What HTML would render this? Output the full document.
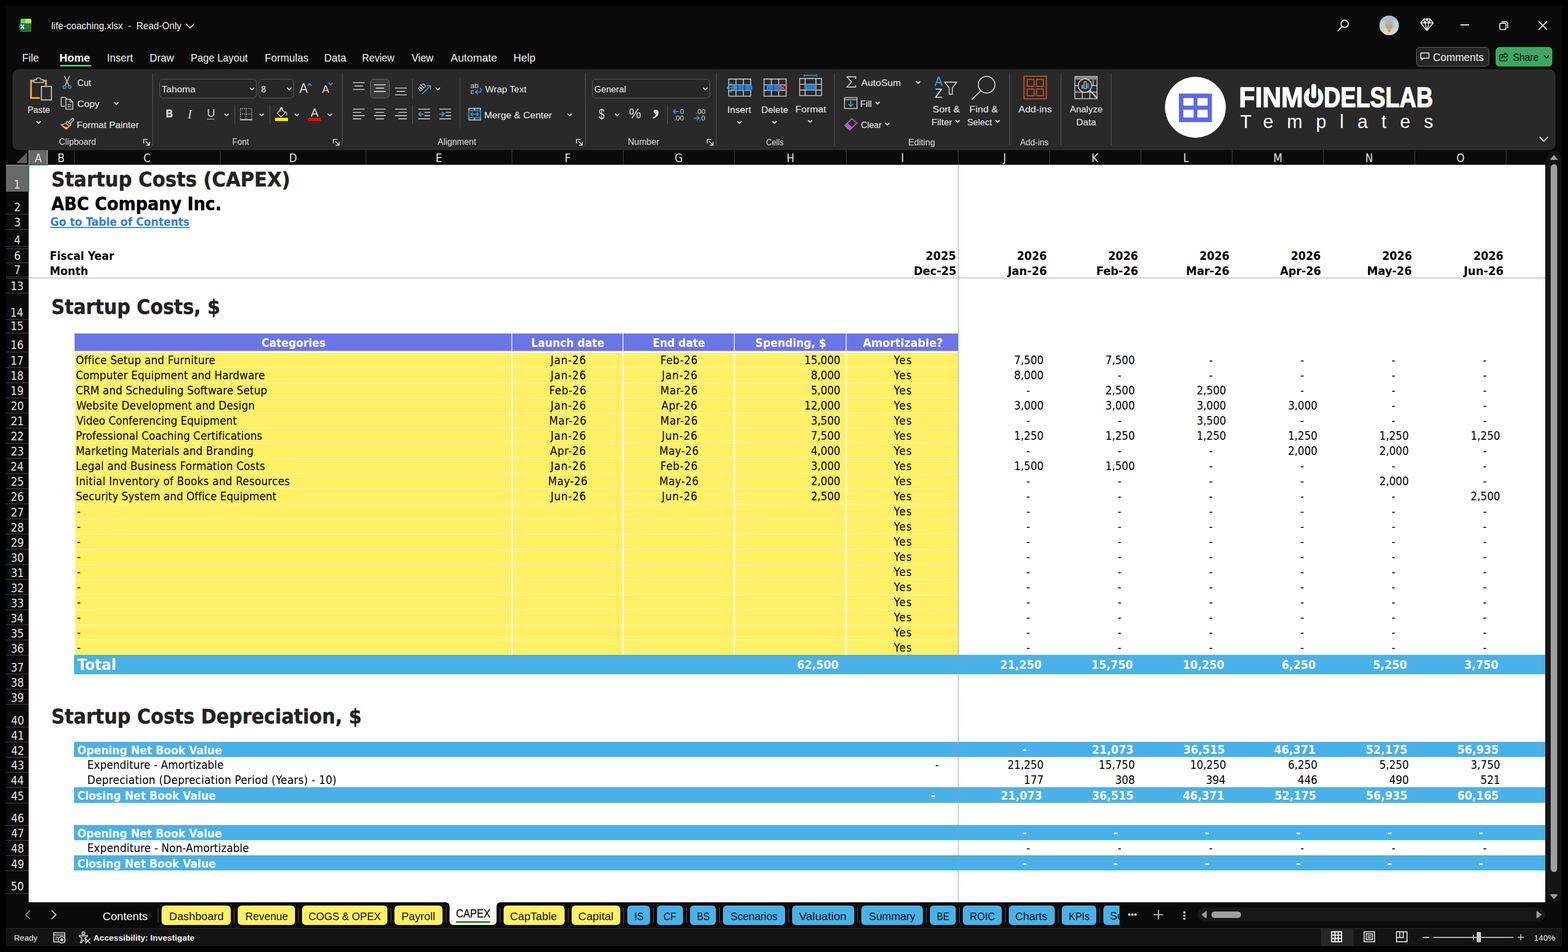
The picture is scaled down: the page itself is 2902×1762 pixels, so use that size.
<!DOCTYPE html>
<html lang="en"><head><meta charset="utf-8"><title>life-coaching.xlsx - Excel</title>
<style>
html,body{margin:0;padding:0;background:#000;}
body{width:2902px;height:1762px;position:relative;overflow:hidden;}
#app div,#app span,#app svg,#app a{position:absolute;display:block;box-sizing:border-box;}
#app span,#app a{white-space:pre;line-height:1;color:#fff;text-decoration:none;}
.u{font-family:"Liberation Sans", sans-serif;}
.c{font-family:"DejaVu Sans Condensed", "DejaVu Sans", sans-serif;}
.d{font-family:"DejaVu Sans", sans-serif;}
.b{font-weight:700;}
.i{font-style:italic;}

</style></head>
<body><div id="app" style="left:0;top:0;width:2902px;height:1762px;overflow:hidden;">
<div style="left:11px;top:11px;width:2880px;height:1740px;background:#0a0a0a;"></div>
<div style="left:53px;top:305px;width:2807px;height:1365.4px;background:#fff;"></div>
<div style="left:53.2px;top:278px;width:35.3px;height:27px;background:#686868;"></div>
<div style="left:53.2px;top:278px;width:0.9px;height:26px;background:#b4b4b4;"></div>
<div style="left:87px;top:278px;width:0.9px;height:26px;background:#b4b4b4;"></div>
<div style="left:52.4px;top:303.8px;width:36.4px;height:1.9px;background:#1a7a43;"></div>
<div style="left:87.9px;top:278.4px;width:1px;height:26.6px;background:#4a4a4a;"></div>
<div style="left:137.1px;top:278.4px;width:1px;height:26.6px;background:#4a4a4a;"></div>
<div style="left:407px;top:278.4px;width:1px;height:26.6px;background:#4a4a4a;"></div>
<div style="left:676.8px;top:278.4px;width:1px;height:26.6px;background:#4a4a4a;"></div>
<div style="left:946.9px;top:278.4px;width:1px;height:26.6px;background:#4a4a4a;"></div>
<div style="left:1152.9px;top:278.4px;width:1px;height:26.6px;background:#4a4a4a;"></div>
<div style="left:1358.7px;top:278.4px;width:1px;height:26.6px;background:#4a4a4a;"></div>
<div style="left:1565.8px;top:278.4px;width:1px;height:26.6px;background:#4a4a4a;"></div>
<div style="left:1773.1px;top:278.4px;width:1px;height:26.6px;background:#4a4a4a;"></div>
<div style="left:1942px;top:278.4px;width:1px;height:26.6px;background:#4a4a4a;"></div>
<div style="left:2110.9px;top:278.4px;width:1px;height:26.6px;background:#4a4a4a;"></div>
<div style="left:2279.8px;top:278.4px;width:1px;height:26.6px;background:#4a4a4a;"></div>
<div style="left:2448.8px;top:278.4px;width:1px;height:26.6px;background:#4a4a4a;"></div>
<div style="left:2617.9px;top:278.4px;width:1px;height:26.6px;background:#4a4a4a;"></div>
<div style="left:2787px;top:278.4px;width:1px;height:26.6px;background:#4a4a4a;"></div>
<span class="c" style="left:64.3px;top:281.6px;font-size:21.3px;color:#e4e4e4;">A</span>
<span class="c" style="left:106.5px;top:281.6px;font-size:21.3px;color:#e4e4e4;">B</span>
<span class="c" style="left:265.55px;top:281.6px;font-size:21.3px;color:#e4e4e4;">C</span>
<span class="c" style="left:534.9px;top:281.6px;font-size:21.3px;color:#e4e4e4;">D</span>
<span class="c" style="left:806.35px;top:281.6px;font-size:21.3px;color:#e4e4e4;">E</span>
<span class="c" style="left:1044.9px;top:281.6px;font-size:21.3px;color:#e4e4e4;">F</span>
<span class="c" style="left:1248.8px;top:281.6px;font-size:21.3px;color:#e4e4e4;">G</span>
<span class="c" style="left:1455.75px;top:281.6px;font-size:21.3px;color:#e4e4e4;">H</span>
<span class="c" style="left:1667.45px;top:281.6px;font-size:21.3px;color:#e4e4e4;">I</span>
<span class="c" style="left:1856.55px;top:281.6px;font-size:21.3px;color:#e4e4e4;">J</span>
<span class="c" style="left:2019.95px;top:281.6px;font-size:21.3px;color:#e4e4e4;">K</span>
<span class="c" style="left:2189.85px;top:281.6px;font-size:21.3px;color:#e4e4e4;">L</span>
<span class="c" style="left:2356.8px;top:281.6px;font-size:21.3px;color:#e4e4e4;">M</span>
<span class="c" style="left:2526.85px;top:281.6px;font-size:21.3px;color:#e4e4e4;">N</span>
<span class="c" style="left:2695.45px;top:281.6px;font-size:21.3px;color:#e4e4e4;">O</span>
<svg style="left:29px;top:281px;" width="22" height="22" viewBox="0 0 22 22"><path d="M21 1V21H1Z" fill="#5e5e5e"/></svg>
<div style="left:11px;top:305px;width:42.2px;height:49.8px;background:#686868;"></div>
<div style="left:11px;top:305px;width:41.4px;height:1px;background:#b4b4b4;"></div>
<div style="left:52px;top:304.6px;width:1.9px;height:50.2px;background:#1a7a43;"></div>
<div style="left:11px;top:354.3px;width:42px;height:1px;background:#4a4a4a;"></div>
<span class="c" style="left:25.5px;top:330.5px;font-size:21.3px;color:#e4e4e4;">1</span>
<div style="left:11px;top:395.7px;width:42px;height:1px;background:#4a4a4a;"></div>
<span class="c" style="left:26px;top:373.1px;font-size:21.3px;color:#e4e4e4;">2</span>
<div style="left:11px;top:424.1px;width:42px;height:1px;background:#4a4a4a;"></div>
<span class="c" style="left:26px;top:400.5px;font-size:21.3px;color:#e4e4e4;">3</span>
<div style="left:11px;top:456.1px;width:42px;height:1px;background:#4a4a4a;"></div>
<span class="c" style="left:26px;top:434.1px;font-size:21.3px;color:#e4e4e4;">4</span>
<div style="left:11px;top:485.8px;width:42px;height:1px;background:#4a4a4a;"></div>
<span class="c" style="left:26px;top:463.2px;font-size:21.3px;color:#e4e4e4;">6</span>
<div style="left:11px;top:511.8px;width:42px;height:1px;background:#4a4a4a;"></div>
<span class="c" style="left:26px;top:489.2px;font-size:21.3px;color:#e4e4e4;">7</span>
<div style="left:11px;top:541.8px;width:42px;height:1px;background:#4a4a4a;"></div>
<span class="c" style="left:19.41px;top:519.2px;font-size:21.3px;color:#e4e4e4;">13</span>
<div style="left:11px;top:590.5px;width:42px;height:1px;background:#4a4a4a;"></div>
<span class="c" style="left:18.91px;top:567.9px;font-size:21.3px;color:#e4e4e4;">14</span>
<div style="left:11px;top:616px;width:42px;height:1px;background:#4a4a4a;"></div>
<span class="c" style="left:19.41px;top:593.4px;font-size:21.3px;color:#e4e4e4;">15</span>
<div style="left:11px;top:650.9px;width:42px;height:1px;background:#4a4a4a;"></div>
<span class="c" style="left:19.41px;top:627.7px;font-size:21.3px;color:#e4e4e4;">16</span>
<div style="left:11px;top:680px;width:42px;height:1px;background:#4a4a4a;"></div>
<span class="c" style="left:19.41px;top:657.4px;font-size:21.3px;color:#e4e4e4;">17</span>
<div style="left:11px;top:708.01px;width:42px;height:1px;background:#4a4a4a;"></div>
<span class="c" style="left:19.41px;top:685.41px;font-size:21.3px;color:#e4e4e4;">18</span>
<div style="left:11px;top:736.02px;width:42px;height:1px;background:#4a4a4a;"></div>
<span class="c" style="left:19.41px;top:713.42px;font-size:21.3px;color:#e4e4e4;">19</span>
<div style="left:11px;top:764.03px;width:42px;height:1px;background:#4a4a4a;"></div>
<span class="c" style="left:19.91px;top:741.43px;font-size:21.3px;color:#e4e4e4;">20</span>
<div style="left:11px;top:792.04px;width:42px;height:1px;background:#4a4a4a;"></div>
<span class="c" style="left:19.91px;top:769.44px;font-size:21.3px;color:#e4e4e4;">21</span>
<div style="left:11px;top:820.05px;width:42px;height:1px;background:#4a4a4a;"></div>
<span class="c" style="left:19.91px;top:797.45px;font-size:21.3px;color:#e4e4e4;">22</span>
<div style="left:11px;top:848.06px;width:42px;height:1px;background:#4a4a4a;"></div>
<span class="c" style="left:19.91px;top:825.46px;font-size:21.3px;color:#e4e4e4;">23</span>
<div style="left:11px;top:876.07px;width:42px;height:1px;background:#4a4a4a;"></div>
<span class="c" style="left:19.41px;top:853.47px;font-size:21.3px;color:#e4e4e4;">24</span>
<div style="left:11px;top:904.08px;width:42px;height:1px;background:#4a4a4a;"></div>
<span class="c" style="left:19.91px;top:881.48px;font-size:21.3px;color:#e4e4e4;">25</span>
<div style="left:11px;top:932.09px;width:42px;height:1px;background:#4a4a4a;"></div>
<span class="c" style="left:19.91px;top:909.49px;font-size:21.3px;color:#e4e4e4;">26</span>
<div style="left:11px;top:960.1px;width:42px;height:1px;background:#4a4a4a;"></div>
<span class="c" style="left:19.91px;top:937.5px;font-size:21.3px;color:#e4e4e4;">27</span>
<div style="left:11px;top:988.11px;width:42px;height:1px;background:#4a4a4a;"></div>
<span class="c" style="left:19.91px;top:965.51px;font-size:21.3px;color:#e4e4e4;">28</span>
<div style="left:11px;top:1016.12px;width:42px;height:1px;background:#4a4a4a;"></div>
<span class="c" style="left:19.91px;top:993.52px;font-size:21.3px;color:#e4e4e4;">29</span>
<div style="left:11px;top:1044.13px;width:42px;height:1px;background:#4a4a4a;"></div>
<span class="c" style="left:19.91px;top:1021.53px;font-size:21.3px;color:#e4e4e4;">30</span>
<div style="left:11px;top:1072.14px;width:42px;height:1px;background:#4a4a4a;"></div>
<span class="c" style="left:19.91px;top:1049.54px;font-size:21.3px;color:#e4e4e4;">31</span>
<div style="left:11px;top:1100.15px;width:42px;height:1px;background:#4a4a4a;"></div>
<span class="c" style="left:19.91px;top:1077.55px;font-size:21.3px;color:#e4e4e4;">32</span>
<div style="left:11px;top:1128.16px;width:42px;height:1px;background:#4a4a4a;"></div>
<span class="c" style="left:19.91px;top:1105.56px;font-size:21.3px;color:#e4e4e4;">33</span>
<div style="left:11px;top:1156.17px;width:42px;height:1px;background:#4a4a4a;"></div>
<span class="c" style="left:19.41px;top:1133.57px;font-size:21.3px;color:#e4e4e4;">34</span>
<div style="left:11px;top:1184.18px;width:42px;height:1px;background:#4a4a4a;"></div>
<span class="c" style="left:19.91px;top:1161.58px;font-size:21.3px;color:#e4e4e4;">35</span>
<div style="left:11px;top:1212.19px;width:42px;height:1px;background:#4a4a4a;"></div>
<span class="c" style="left:19.91px;top:1189.59px;font-size:21.3px;color:#e4e4e4;">36</span>
<div style="left:11px;top:1247.2px;width:42px;height:1px;background:#4a4a4a;"></div>
<span class="c" style="left:19.91px;top:1224.6px;font-size:21.3px;color:#e4e4e4;">37</span>
<div style="left:11px;top:1275.1px;width:42px;height:1px;background:#4a4a4a;"></div>
<span class="c" style="left:19.91px;top:1252.5px;font-size:21.3px;color:#e4e4e4;">38</span>
<div style="left:11px;top:1303.1px;width:42px;height:1px;background:#4a4a4a;"></div>
<span class="c" style="left:19.91px;top:1280.5px;font-size:21.3px;color:#e4e4e4;">39</span>
<div style="left:11px;top:1345.3px;width:42px;height:1px;background:#4a4a4a;"></div>
<span class="c" style="left:20.41px;top:1322.7px;font-size:21.3px;color:#e4e4e4;">40</span>
<div style="left:11px;top:1373.1px;width:42px;height:1px;background:#4a4a4a;"></div>
<span class="c" style="left:20.41px;top:1350.5px;font-size:21.3px;color:#e4e4e4;">41</span>
<div style="left:11px;top:1401.1px;width:42px;height:1px;background:#4a4a4a;"></div>
<span class="c" style="left:20.41px;top:1378.5px;font-size:21.3px;color:#e4e4e4;">42</span>
<div style="left:11px;top:1428.8px;width:42px;height:1px;background:#4a4a4a;"></div>
<span class="c" style="left:20.41px;top:1406.2px;font-size:21.3px;color:#e4e4e4;">43</span>
<div style="left:11px;top:1456.7px;width:42px;height:1px;background:#4a4a4a;"></div>
<span class="c" style="left:19.91px;top:1434.1px;font-size:21.3px;color:#e4e4e4;">44</span>
<div style="left:11px;top:1485.5px;width:42px;height:1px;background:#4a4a4a;"></div>
<span class="c" style="left:20.41px;top:1462.9px;font-size:21.3px;color:#e4e4e4;">45</span>
<div style="left:11px;top:1526.9px;width:42px;height:1px;background:#4a4a4a;"></div>
<span class="c" style="left:20.41px;top:1504.3px;font-size:21.3px;color:#e4e4e4;">46</span>
<div style="left:11px;top:1554.9px;width:42px;height:1px;background:#4a4a4a;"></div>
<span class="c" style="left:20.41px;top:1532.3px;font-size:21.3px;color:#e4e4e4;">47</span>
<div style="left:11px;top:1582.9px;width:42px;height:1px;background:#4a4a4a;"></div>
<span class="c" style="left:20.41px;top:1560.3px;font-size:21.3px;color:#e4e4e4;">48</span>
<div style="left:11px;top:1611.4px;width:42px;height:1px;background:#4a4a4a;"></div>
<span class="c" style="left:20.41px;top:1588.8px;font-size:21.3px;color:#e4e4e4;">49</span>
<div style="left:11px;top:1653px;width:42px;height:1px;background:#4a4a4a;"></div>
<span class="c" style="left:19.91px;top:1630.4px;font-size:21.3px;color:#e4e4e4;">50</span>
<div style="left:11px;top:459.5px;width:42px;height:1px;background:#4a4a4a;"></div>
<div style="left:11px;top:515.3px;width:42px;height:1px;background:#4a4a4a;"></div>
<svg style="left:138.2px;top:610px;" width="1635" height="610" viewBox="0 0 1635 610"><rect x="0" y="7.2" width="1635" height="32.4" fill="#6c75e6"/><rect x="0.9" y="42.8" width="1634.1" height="559.5" fill="#fff066"/><rect x="0.9" y="69.95" width="1634.1" height="1.1" fill="#fff" fill-opacity="0.62"/><rect x="0.9" y="97.96" width="1634.1" height="1.1" fill="#fff" fill-opacity="0.62"/><rect x="0.9" y="125.97" width="1634.1" height="1.1" fill="#fff" fill-opacity="0.62"/><rect x="0.9" y="153.98" width="1634.1" height="1.1" fill="#fff" fill-opacity="0.62"/><rect x="0.9" y="181.99" width="1634.1" height="1.1" fill="#fff" fill-opacity="0.62"/><rect x="0.9" y="210" width="1634.1" height="1.1" fill="#fff" fill-opacity="0.62"/><rect x="0.9" y="238.01" width="1634.1" height="1.1" fill="#fff" fill-opacity="0.62"/><rect x="0.9" y="266.02" width="1634.1" height="1.1" fill="#fff" fill-opacity="0.62"/><rect x="0.9" y="294.03" width="1634.1" height="1.1" fill="#fff" fill-opacity="0.62"/><rect x="0.9" y="322.04" width="1634.1" height="1.1" fill="#fff" fill-opacity="0.62"/><rect x="0.9" y="350.05" width="1634.1" height="1.1" fill="#fff" fill-opacity="0.62"/><rect x="0.9" y="378.06" width="1634.1" height="1.1" fill="#fff" fill-opacity="0.62"/><rect x="0.9" y="406.07" width="1634.1" height="1.1" fill="#fff" fill-opacity="0.62"/><rect x="0.9" y="434.08" width="1634.1" height="1.1" fill="#fff" fill-opacity="0.62"/><rect x="0.9" y="462.09" width="1634.1" height="1.1" fill="#fff" fill-opacity="0.62"/><rect x="0.9" y="490.1" width="1634.1" height="1.1" fill="#fff" fill-opacity="0.62"/><rect x="0.9" y="518.11" width="1634.1" height="1.1" fill="#fff" fill-opacity="0.62"/><rect x="0.9" y="546.12" width="1634.1" height="1.1" fill="#fff" fill-opacity="0.62"/><rect x="0.9" y="574.13" width="1634.1" height="1.1" fill="#fff" fill-opacity="0.62"/><rect x="808.6" y="7.2" width="1.4" height="32.4" fill="#fff"/><rect x="808.1" y="42.8" width="2.4" height="559.5" fill="#fff"/><rect x="1014.5" y="7.2" width="1.4" height="32.4" fill="#fff"/><rect x="1014" y="42.8" width="2.4" height="559.5" fill="#fff"/><rect x="1220.4" y="7.2" width="1.4" height="32.4" fill="#fff"/><rect x="1219.9" y="42.8" width="2.4" height="559.5" fill="#fff"/><rect x="1427.5" y="7.2" width="1.4" height="32.4" fill="#fff"/><rect x="1427" y="42.8" width="2.4" height="559.5" fill="#fff"/></svg>
<div style="left:137px;top:1212.2px;width:2723px;height:35.5px;background:#4ab1e8;"></div>
<div style="left:137px;top:1373.1px;width:2723px;height:27.5px;background:#4ab1e8;"></div>
<div style="left:137px;top:1456.9px;width:2723px;height:28.8px;background:#4ab1e8;"></div>
<div style="left:137px;top:1527px;width:2723px;height:27.7px;background:#4ab1e8;"></div>
<div style="left:137px;top:1583.2px;width:2723px;height:28.3px;background:#4ab1e8;"></div>
<div style="left:53px;top:513.8px;width:2807px;height:1px;background:#9b9b9b;"></div>
<div style="left:1773.1px;top:305px;width:1px;height:1365.4px;background:#9b9b9b;"></div>
<span class="c b" style="left:94.55px;top:313.7px;font-size:37.9px;color:#222;transform:scaleX(1.0243);transform-origin:0 0;-webkit-text-stroke:0.5px #222;">Startup Costs (CAPEX)</span>
<span class="c b" style="left:94.6px;top:360.9px;font-size:33.8px;color:#000;transform:scaleX(1.0117);transform-origin:0 0;-webkit-text-stroke:0.5px #000;">ABC Company Inc.</span>
<a class="c b" style="left:92.6px;top:399.6px;font-size:21.3px;color:#2f7df0;transform:scaleX(1.0185);transform-origin:0 0;text-decoration:underline;text-decoration-thickness:1.7px;text-underline-offset:1.6px;">Go to Table of Contents</a>
<span class="c b" style="left:91.97px;top:462.7px;font-size:21.3px;color:#000;transform:scaleX(1.0294);transform-origin:0 0;">Fiscal Year</span>
<span class="c b" style="left:91.96px;top:490.9px;font-size:21.3px;color:#000;transform:scaleX(1.0352);transform-origin:0 0;">Month</span>
<span class="c b" style="left:1713.34px;top:462.8px;font-size:21.3px;color:#000;transform:scaleX(1.0589);transform-origin:0 0;">2025</span>
<span class="c b" style="left:1690.64px;top:491px;font-size:21.3px;color:#000;transform:scaleX(1.0572);transform-origin:0 0;">Dec-25</span>
<span class="c b" style="left:1882.26px;top:462.8px;font-size:21.3px;color:#000;transform:scaleX(1.0386);transform-origin:0 0;">2026</span>
<span class="c b" style="left:1865.03px;top:491px;font-size:21.3px;color:#000;transform:scaleX(1.0632);transform-origin:0 0;">Jan-26</span>
<span class="c b" style="left:2051.16px;top:462.8px;font-size:21.3px;color:#000;transform:scaleX(1.0386);transform-origin:0 0;">2026</span>
<span class="c b" style="left:2028.95px;top:491px;font-size:21.3px;color:#000;transform:scaleX(1.055);transform-origin:0 0;">Feb-26</span>
<span class="c b" style="left:2220.06px;top:462.8px;font-size:21.3px;color:#000;transform:scaleX(1.0386);transform-origin:0 0;">2026</span>
<span class="c b" style="left:2195.14px;top:491px;font-size:21.3px;color:#000;transform:scaleX(1.0557);transform-origin:0 0;">Mar-26</span>
<span class="c b" style="left:2389.06px;top:462.8px;font-size:21.3px;color:#000;transform:scaleX(1.0386);transform-origin:0 0;">2026</span>
<span class="c b" style="left:2368.5px;top:491px;font-size:21.3px;color:#000;transform:scaleX(1.0459);transform-origin:0 0;">Apr-26</span>
<span class="c b" style="left:2558.16px;top:462.8px;font-size:21.3px;color:#000;transform:scaleX(1.0386);transform-origin:0 0;">2026</span>
<span class="c b" style="left:2530.44px;top:491px;font-size:21.3px;color:#000;transform:scaleX(1.0594);transform-origin:0 0;">May-26</span>
<span class="c b" style="left:2727.26px;top:462.8px;font-size:21.3px;color:#000;transform:scaleX(1.0386);transform-origin:0 0;">2026</span>
<span class="c b" style="left:2708.84px;top:491px;font-size:21.3px;color:#000;transform:scaleX(1.0694);transform-origin:0 0;">Jun-26</span>
<span class="c b" style="left:94.59px;top:550px;font-size:37.9px;color:#222;transform:scaleX(1.0038);transform-origin:0 0;-webkit-text-stroke:0.5px #222;">Startup Costs, $</span>
<span class="c b" style="left:483.75px;top:623.5px;font-size:21.3px;transform:scaleX(1.0178);transform-origin:0 0;">Categories</span>
<span class="c b" style="left:982.78px;top:623.5px;font-size:21.3px;transform:scaleX(1.019);transform-origin:0 0;">Launch date</span>
<span class="c b" style="left:1208.09px;top:623.5px;font-size:21.3px;transform:scaleX(1.0093);transform-origin:0 0;">End date</span>
<span class="c b" style="left:1397.88px;top:623.5px;font-size:21.3px;transform:scaleX(1.0161);transform-origin:0 0;">Spending, $</span>
<span class="c b" style="left:1597.15px;top:623.5px;font-size:21.3px;transform:scaleX(1.0442);transform-origin:0 0;">Amortizable?</span>
<span class="c" style="left:140.2px;top:655.9px;font-size:21.3px;letter-spacing:0.242px;color:#000;">Office Setup and Furniture</span>
<span class="c" style="left:1018.95px;top:655.9px;font-size:21.3px;letter-spacing:0.933px;color:#000;">Jan-26</span>
<span class="c" style="left:1222.35px;top:655.9px;font-size:21.3px;letter-spacing:0.676px;color:#000;">Feb-26</span>
<span class="c" style="left:1488.52px;top:655.9px;font-size:21.3px;letter-spacing:-0.05px;color:#000;">15,000</span>
<span class="c" style="left:1654.15px;top:655.9px;font-size:21.3px;letter-spacing:1.169px;color:#000;">Yes</span>
<span class="c" style="left:1876.85px;top:655.9px;font-size:21.3px;letter-spacing:-0.05px;color:#000;">7,500</span>
<span class="c" style="left:2045.75px;top:655.9px;font-size:21.3px;letter-spacing:-0.05px;color:#000;">7,500</span>
<span class="c" style="left:2237.4px;top:655.9px;font-size:21.3px;color:#000;">-</span>
<span class="c" style="left:2406.4px;top:655.9px;font-size:21.3px;color:#000;">-</span>
<span class="c" style="left:2575.5px;top:655.9px;font-size:21.3px;color:#000;">-</span>
<span class="c" style="left:2744.6px;top:655.9px;font-size:21.3px;color:#000;">-</span>
<span class="c" style="left:140.2px;top:683.91px;font-size:21.3px;letter-spacing:0.133px;color:#000;">Computer Equipment and Hardware</span>
<span class="c" style="left:1018.95px;top:683.91px;font-size:21.3px;letter-spacing:0.933px;color:#000;">Jan-26</span>
<span class="c" style="left:1224.85px;top:683.91px;font-size:21.3px;letter-spacing:0.933px;color:#000;">Jan-26</span>
<span class="c" style="left:1500.65px;top:683.91px;font-size:21.3px;letter-spacing:-0.05px;color:#000;">8,000</span>
<span class="c" style="left:1654.15px;top:683.91px;font-size:21.3px;letter-spacing:1.169px;color:#000;">Yes</span>
<span class="c" style="left:1876.85px;top:683.91px;font-size:21.3px;letter-spacing:-0.05px;color:#000;">8,000</span>
<span class="c" style="left:2068.5px;top:683.91px;font-size:21.3px;color:#000;">-</span>
<span class="c" style="left:2237.4px;top:683.91px;font-size:21.3px;color:#000;">-</span>
<span class="c" style="left:2406.4px;top:683.91px;font-size:21.3px;color:#000;">-</span>
<span class="c" style="left:2575.5px;top:683.91px;font-size:21.3px;color:#000;">-</span>
<span class="c" style="left:2744.6px;top:683.91px;font-size:21.3px;color:#000;">-</span>
<span class="c" style="left:140.2px;top:711.92px;font-size:21.3px;letter-spacing:0.144px;color:#000;">CRM and Scheduling Software Setup</span>
<span class="c" style="left:1016.45px;top:711.92px;font-size:21.3px;letter-spacing:0.676px;color:#000;">Feb-26</span>
<span class="c" style="left:1222.1px;top:711.92px;font-size:21.3px;letter-spacing:0.583px;color:#000;">Mar-26</span>
<span class="c" style="left:1500.65px;top:711.92px;font-size:21.3px;letter-spacing:-0.05px;color:#000;">5,000</span>
<span class="c" style="left:1654.15px;top:711.92px;font-size:21.3px;letter-spacing:1.169px;color:#000;">Yes</span>
<span class="c" style="left:1899.6px;top:711.92px;font-size:21.3px;color:#000;">-</span>
<span class="c" style="left:2045.75px;top:711.92px;font-size:21.3px;letter-spacing:-0.05px;color:#000;">2,500</span>
<span class="c" style="left:2214.65px;top:711.92px;font-size:21.3px;letter-spacing:-0.05px;color:#000;">2,500</span>
<span class="c" style="left:2406.4px;top:711.92px;font-size:21.3px;color:#000;">-</span>
<span class="c" style="left:2575.5px;top:711.92px;font-size:21.3px;color:#000;">-</span>
<span class="c" style="left:2744.6px;top:711.92px;font-size:21.3px;color:#000;">-</span>
<span class="c" style="left:141.2px;top:739.93px;font-size:21.3px;letter-spacing:0.156px;color:#000;">Website Development and Design</span>
<span class="c" style="left:1018.95px;top:739.93px;font-size:21.3px;letter-spacing:0.933px;color:#000;">Jan-26</span>
<span class="c" style="left:1224px;top:739.93px;font-size:21.3px;letter-spacing:0.624px;color:#000;">Apr-26</span>
<span class="c" style="left:1488.52px;top:739.93px;font-size:21.3px;letter-spacing:-0.05px;color:#000;">12,000</span>
<span class="c" style="left:1654.15px;top:739.93px;font-size:21.3px;letter-spacing:1.169px;color:#000;">Yes</span>
<span class="c" style="left:1876.85px;top:739.93px;font-size:21.3px;letter-spacing:-0.05px;color:#000;">3,000</span>
<span class="c" style="left:2045.75px;top:739.93px;font-size:21.3px;letter-spacing:-0.05px;color:#000;">3,000</span>
<span class="c" style="left:2214.65px;top:739.93px;font-size:21.3px;letter-spacing:-0.05px;color:#000;">3,000</span>
<span class="c" style="left:2383.65px;top:739.93px;font-size:21.3px;letter-spacing:-0.05px;color:#000;">3,000</span>
<span class="c" style="left:2575.5px;top:739.93px;font-size:21.3px;color:#000;">-</span>
<span class="c" style="left:2744.6px;top:739.93px;font-size:21.3px;color:#000;">-</span>
<span class="c" style="left:141.2px;top:767.94px;font-size:21.3px;letter-spacing:-0.004px;color:#000;">Video Conferencing Equipment</span>
<span class="c" style="left:1016.2px;top:767.94px;font-size:21.3px;letter-spacing:0.583px;color:#000;">Mar-26</span>
<span class="c" style="left:1222.1px;top:767.94px;font-size:21.3px;letter-spacing:0.583px;color:#000;">Mar-26</span>
<span class="c" style="left:1500.65px;top:767.94px;font-size:21.3px;letter-spacing:-0.05px;color:#000;">3,500</span>
<span class="c" style="left:1654.15px;top:767.94px;font-size:21.3px;letter-spacing:1.169px;color:#000;">Yes</span>
<span class="c" style="left:1899.6px;top:767.94px;font-size:21.3px;color:#000;">-</span>
<span class="c" style="left:2068.5px;top:767.94px;font-size:21.3px;color:#000;">-</span>
<span class="c" style="left:2214.65px;top:767.94px;font-size:21.3px;letter-spacing:-0.05px;color:#000;">3,500</span>
<span class="c" style="left:2406.4px;top:767.94px;font-size:21.3px;color:#000;">-</span>
<span class="c" style="left:2575.5px;top:767.94px;font-size:21.3px;color:#000;">-</span>
<span class="c" style="left:2744.6px;top:767.94px;font-size:21.3px;color:#000;">-</span>
<span class="c" style="left:140.2px;top:795.95px;font-size:21.3px;letter-spacing:0.054px;color:#000;">Professional Coaching Certifications</span>
<span class="c" style="left:1018.95px;top:795.95px;font-size:21.3px;letter-spacing:0.933px;color:#000;">Jan-26</span>
<span class="c" style="left:1224.8px;top:795.95px;font-size:21.3px;letter-spacing:0.872px;color:#000;">Jun-26</span>
<span class="c" style="left:1500.65px;top:795.95px;font-size:21.3px;letter-spacing:-0.05px;color:#000;">7,500</span>
<span class="c" style="left:1654.15px;top:795.95px;font-size:21.3px;letter-spacing:1.169px;color:#000;">Yes</span>
<span class="c" style="left:1876.85px;top:795.95px;font-size:21.3px;letter-spacing:-0.05px;color:#000;">1,250</span>
<span class="c" style="left:2045.75px;top:795.95px;font-size:21.3px;letter-spacing:-0.05px;color:#000;">1,250</span>
<span class="c" style="left:2214.65px;top:795.95px;font-size:21.3px;letter-spacing:-0.05px;color:#000;">1,250</span>
<span class="c" style="left:2383.65px;top:795.95px;font-size:21.3px;letter-spacing:-0.05px;color:#000;">1,250</span>
<span class="c" style="left:2552.75px;top:795.95px;font-size:21.3px;letter-spacing:-0.05px;color:#000;">1,250</span>
<span class="c" style="left:2721.85px;top:795.95px;font-size:21.3px;letter-spacing:-0.05px;color:#000;">1,250</span>
<span class="c" style="left:140.2px;top:823.96px;font-size:21.3px;letter-spacing:0.149px;color:#000;">Marketing Materials and Branding</span>
<span class="c" style="left:1018.1px;top:823.96px;font-size:21.3px;letter-spacing:0.624px;color:#000;">Apr-26</span>
<span class="c" style="left:1220.2px;top:823.96px;font-size:21.3px;letter-spacing:0.452px;color:#000;">May-26</span>
<span class="c" style="left:1500.65px;top:823.96px;font-size:21.3px;letter-spacing:-0.05px;color:#000;">4,000</span>
<span class="c" style="left:1654.15px;top:823.96px;font-size:21.3px;letter-spacing:1.169px;color:#000;">Yes</span>
<span class="c" style="left:1899.6px;top:823.96px;font-size:21.3px;color:#000;">-</span>
<span class="c" style="left:2068.5px;top:823.96px;font-size:21.3px;color:#000;">-</span>
<span class="c" style="left:2237.4px;top:823.96px;font-size:21.3px;color:#000;">-</span>
<span class="c" style="left:2383.65px;top:823.96px;font-size:21.3px;letter-spacing:-0.05px;color:#000;">2,000</span>
<span class="c" style="left:2552.75px;top:823.96px;font-size:21.3px;letter-spacing:-0.05px;color:#000;">2,000</span>
<span class="c" style="left:2744.6px;top:823.96px;font-size:21.3px;color:#000;">-</span>
<span class="c" style="left:140.2px;top:851.97px;font-size:21.3px;letter-spacing:0.152px;color:#000;">Legal and Business Formation Costs</span>
<span class="c" style="left:1018.95px;top:851.97px;font-size:21.3px;letter-spacing:0.933px;color:#000;">Jan-26</span>
<span class="c" style="left:1222.35px;top:851.97px;font-size:21.3px;letter-spacing:0.676px;color:#000;">Feb-26</span>
<span class="c" style="left:1500.65px;top:851.97px;font-size:21.3px;letter-spacing:-0.05px;color:#000;">3,000</span>
<span class="c" style="left:1654.15px;top:851.97px;font-size:21.3px;letter-spacing:1.169px;color:#000;">Yes</span>
<span class="c" style="left:1876.85px;top:851.97px;font-size:21.3px;letter-spacing:-0.05px;color:#000;">1,500</span>
<span class="c" style="left:2045.75px;top:851.97px;font-size:21.3px;letter-spacing:-0.05px;color:#000;">1,500</span>
<span class="c" style="left:2237.4px;top:851.97px;font-size:21.3px;color:#000;">-</span>
<span class="c" style="left:2406.4px;top:851.97px;font-size:21.3px;color:#000;">-</span>
<span class="c" style="left:2575.5px;top:851.97px;font-size:21.3px;color:#000;">-</span>
<span class="c" style="left:2744.6px;top:851.97px;font-size:21.3px;color:#000;">-</span>
<span class="c" style="left:140.2px;top:879.98px;font-size:21.3px;letter-spacing:0.294px;color:#000;">Initial Inventory of Books and Resources</span>
<span class="c" style="left:1014.3px;top:879.98px;font-size:21.3px;letter-spacing:0.452px;color:#000;">May-26</span>
<span class="c" style="left:1220.2px;top:879.98px;font-size:21.3px;letter-spacing:0.452px;color:#000;">May-26</span>
<span class="c" style="left:1500.65px;top:879.98px;font-size:21.3px;letter-spacing:-0.05px;color:#000;">2,000</span>
<span class="c" style="left:1654.15px;top:879.98px;font-size:21.3px;letter-spacing:1.169px;color:#000;">Yes</span>
<span class="c" style="left:1899.6px;top:879.98px;font-size:21.3px;color:#000;">-</span>
<span class="c" style="left:2068.5px;top:879.98px;font-size:21.3px;color:#000;">-</span>
<span class="c" style="left:2237.4px;top:879.98px;font-size:21.3px;color:#000;">-</span>
<span class="c" style="left:2406.4px;top:879.98px;font-size:21.3px;color:#000;">-</span>
<span class="c" style="left:2552.75px;top:879.98px;font-size:21.3px;letter-spacing:-0.05px;color:#000;">2,000</span>
<span class="c" style="left:2744.6px;top:879.98px;font-size:21.3px;color:#000;">-</span>
<span class="c" style="left:140.2px;top:907.99px;font-size:21.3px;letter-spacing:0.015px;color:#000;">Security System and Office Equipment</span>
<span class="c" style="left:1018.9px;top:907.99px;font-size:21.3px;letter-spacing:0.872px;color:#000;">Jun-26</span>
<span class="c" style="left:1224.8px;top:907.99px;font-size:21.3px;letter-spacing:0.872px;color:#000;">Jun-26</span>
<span class="c" style="left:1500.65px;top:907.99px;font-size:21.3px;letter-spacing:-0.05px;color:#000;">2,500</span>
<span class="c" style="left:1654.15px;top:907.99px;font-size:21.3px;letter-spacing:1.169px;color:#000;">Yes</span>
<span class="c" style="left:1899.6px;top:907.99px;font-size:21.3px;color:#000;">-</span>
<span class="c" style="left:2068.5px;top:907.99px;font-size:21.3px;color:#000;">-</span>
<span class="c" style="left:2237.4px;top:907.99px;font-size:21.3px;color:#000;">-</span>
<span class="c" style="left:2406.4px;top:907.99px;font-size:21.3px;color:#000;">-</span>
<span class="c" style="left:2575.5px;top:907.99px;font-size:21.3px;color:#000;">-</span>
<span class="c" style="left:2721.85px;top:907.99px;font-size:21.3px;letter-spacing:-0.05px;color:#000;">2,500</span>
<span class="c" style="left:142.3px;top:936px;font-size:21.3px;color:#000;">-</span>
<span class="c" style="left:1654.15px;top:936px;font-size:21.3px;letter-spacing:1.169px;color:#000;">Yes</span>
<span class="c" style="left:1899.6px;top:936px;font-size:21.3px;color:#000;">-</span>
<span class="c" style="left:2068.5px;top:936px;font-size:21.3px;color:#000;">-</span>
<span class="c" style="left:2237.4px;top:936px;font-size:21.3px;color:#000;">-</span>
<span class="c" style="left:2406.4px;top:936px;font-size:21.3px;color:#000;">-</span>
<span class="c" style="left:2575.5px;top:936px;font-size:21.3px;color:#000;">-</span>
<span class="c" style="left:2744.6px;top:936px;font-size:21.3px;color:#000;">-</span>
<span class="c" style="left:142.3px;top:964.01px;font-size:21.3px;color:#000;">-</span>
<span class="c" style="left:1654.15px;top:964.01px;font-size:21.3px;letter-spacing:1.169px;color:#000;">Yes</span>
<span class="c" style="left:1899.6px;top:964.01px;font-size:21.3px;color:#000;">-</span>
<span class="c" style="left:2068.5px;top:964.01px;font-size:21.3px;color:#000;">-</span>
<span class="c" style="left:2237.4px;top:964.01px;font-size:21.3px;color:#000;">-</span>
<span class="c" style="left:2406.4px;top:964.01px;font-size:21.3px;color:#000;">-</span>
<span class="c" style="left:2575.5px;top:964.01px;font-size:21.3px;color:#000;">-</span>
<span class="c" style="left:2744.6px;top:964.01px;font-size:21.3px;color:#000;">-</span>
<span class="c" style="left:142.3px;top:992.02px;font-size:21.3px;color:#000;">-</span>
<span class="c" style="left:1654.15px;top:992.02px;font-size:21.3px;letter-spacing:1.169px;color:#000;">Yes</span>
<span class="c" style="left:1899.6px;top:992.02px;font-size:21.3px;color:#000;">-</span>
<span class="c" style="left:2068.5px;top:992.02px;font-size:21.3px;color:#000;">-</span>
<span class="c" style="left:2237.4px;top:992.02px;font-size:21.3px;color:#000;">-</span>
<span class="c" style="left:2406.4px;top:992.02px;font-size:21.3px;color:#000;">-</span>
<span class="c" style="left:2575.5px;top:992.02px;font-size:21.3px;color:#000;">-</span>
<span class="c" style="left:2744.6px;top:992.02px;font-size:21.3px;color:#000;">-</span>
<span class="c" style="left:142.3px;top:1020.03px;font-size:21.3px;color:#000;">-</span>
<span class="c" style="left:1654.15px;top:1020.03px;font-size:21.3px;letter-spacing:1.169px;color:#000;">Yes</span>
<span class="c" style="left:1899.6px;top:1020.03px;font-size:21.3px;color:#000;">-</span>
<span class="c" style="left:2068.5px;top:1020.03px;font-size:21.3px;color:#000;">-</span>
<span class="c" style="left:2237.4px;top:1020.03px;font-size:21.3px;color:#000;">-</span>
<span class="c" style="left:2406.4px;top:1020.03px;font-size:21.3px;color:#000;">-</span>
<span class="c" style="left:2575.5px;top:1020.03px;font-size:21.3px;color:#000;">-</span>
<span class="c" style="left:2744.6px;top:1020.03px;font-size:21.3px;color:#000;">-</span>
<span class="c" style="left:142.3px;top:1048.04px;font-size:21.3px;color:#000;">-</span>
<span class="c" style="left:1654.15px;top:1048.04px;font-size:21.3px;letter-spacing:1.169px;color:#000;">Yes</span>
<span class="c" style="left:1899.6px;top:1048.04px;font-size:21.3px;color:#000;">-</span>
<span class="c" style="left:2068.5px;top:1048.04px;font-size:21.3px;color:#000;">-</span>
<span class="c" style="left:2237.4px;top:1048.04px;font-size:21.3px;color:#000;">-</span>
<span class="c" style="left:2406.4px;top:1048.04px;font-size:21.3px;color:#000;">-</span>
<span class="c" style="left:2575.5px;top:1048.04px;font-size:21.3px;color:#000;">-</span>
<span class="c" style="left:2744.6px;top:1048.04px;font-size:21.3px;color:#000;">-</span>
<span class="c" style="left:142.3px;top:1076.05px;font-size:21.3px;color:#000;">-</span>
<span class="c" style="left:1654.15px;top:1076.05px;font-size:21.3px;letter-spacing:1.169px;color:#000;">Yes</span>
<span class="c" style="left:1899.6px;top:1076.05px;font-size:21.3px;color:#000;">-</span>
<span class="c" style="left:2068.5px;top:1076.05px;font-size:21.3px;color:#000;">-</span>
<span class="c" style="left:2237.4px;top:1076.05px;font-size:21.3px;color:#000;">-</span>
<span class="c" style="left:2406.4px;top:1076.05px;font-size:21.3px;color:#000;">-</span>
<span class="c" style="left:2575.5px;top:1076.05px;font-size:21.3px;color:#000;">-</span>
<span class="c" style="left:2744.6px;top:1076.05px;font-size:21.3px;color:#000;">-</span>
<span class="c" style="left:142.3px;top:1104.06px;font-size:21.3px;color:#000;">-</span>
<span class="c" style="left:1654.15px;top:1104.06px;font-size:21.3px;letter-spacing:1.169px;color:#000;">Yes</span>
<span class="c" style="left:1899.6px;top:1104.06px;font-size:21.3px;color:#000;">-</span>
<span class="c" style="left:2068.5px;top:1104.06px;font-size:21.3px;color:#000;">-</span>
<span class="c" style="left:2237.4px;top:1104.06px;font-size:21.3px;color:#000;">-</span>
<span class="c" style="left:2406.4px;top:1104.06px;font-size:21.3px;color:#000;">-</span>
<span class="c" style="left:2575.5px;top:1104.06px;font-size:21.3px;color:#000;">-</span>
<span class="c" style="left:2744.6px;top:1104.06px;font-size:21.3px;color:#000;">-</span>
<span class="c" style="left:142.3px;top:1132.07px;font-size:21.3px;color:#000;">-</span>
<span class="c" style="left:1654.15px;top:1132.07px;font-size:21.3px;letter-spacing:1.169px;color:#000;">Yes</span>
<span class="c" style="left:1899.6px;top:1132.07px;font-size:21.3px;color:#000;">-</span>
<span class="c" style="left:2068.5px;top:1132.07px;font-size:21.3px;color:#000;">-</span>
<span class="c" style="left:2237.4px;top:1132.07px;font-size:21.3px;color:#000;">-</span>
<span class="c" style="left:2406.4px;top:1132.07px;font-size:21.3px;color:#000;">-</span>
<span class="c" style="left:2575.5px;top:1132.07px;font-size:21.3px;color:#000;">-</span>
<span class="c" style="left:2744.6px;top:1132.07px;font-size:21.3px;color:#000;">-</span>
<span class="c" style="left:142.3px;top:1160.08px;font-size:21.3px;color:#000;">-</span>
<span class="c" style="left:1654.15px;top:1160.08px;font-size:21.3px;letter-spacing:1.169px;color:#000;">Yes</span>
<span class="c" style="left:1899.6px;top:1160.08px;font-size:21.3px;color:#000;">-</span>
<span class="c" style="left:2068.5px;top:1160.08px;font-size:21.3px;color:#000;">-</span>
<span class="c" style="left:2237.4px;top:1160.08px;font-size:21.3px;color:#000;">-</span>
<span class="c" style="left:2406.4px;top:1160.08px;font-size:21.3px;color:#000;">-</span>
<span class="c" style="left:2575.5px;top:1160.08px;font-size:21.3px;color:#000;">-</span>
<span class="c" style="left:2744.6px;top:1160.08px;font-size:21.3px;color:#000;">-</span>
<span class="c" style="left:142.3px;top:1188.09px;font-size:21.3px;color:#000;">-</span>
<span class="c" style="left:1654.15px;top:1188.09px;font-size:21.3px;letter-spacing:1.169px;color:#000;">Yes</span>
<span class="c" style="left:1899.6px;top:1188.09px;font-size:21.3px;color:#000;">-</span>
<span class="c" style="left:2068.5px;top:1188.09px;font-size:21.3px;color:#000;">-</span>
<span class="c" style="left:2237.4px;top:1188.09px;font-size:21.3px;color:#000;">-</span>
<span class="c" style="left:2406.4px;top:1188.09px;font-size:21.3px;color:#000;">-</span>
<span class="c" style="left:2575.5px;top:1188.09px;font-size:21.3px;color:#000;">-</span>
<span class="c" style="left:2744.6px;top:1188.09px;font-size:21.3px;color:#000;">-</span>
<span class="c b" style="left:143.3px;top:1216.9px;font-size:27.6px;transform:scaleX(1.0675);transform-origin:0 0;">Total</span>
<span class="c b" style="left:1475.15px;top:1220.1px;font-size:21.3px;transform:scaleX(1.04);transform-origin:0 0;">62,500</span>
<span class="c b" style="left:1851.35px;top:1220.1px;font-size:21.3px;transform:scaleX(1.04);transform-origin:0 0;">21,250</span>
<span class="c b" style="left:2020.25px;top:1220.1px;font-size:21.3px;transform:scaleX(1.04);transform-origin:0 0;">15,750</span>
<span class="c b" style="left:2189.15px;top:1220.1px;font-size:21.3px;transform:scaleX(1.04);transform-origin:0 0;">10,250</span>
<span class="c b" style="left:2372.02px;top:1220.1px;font-size:21.3px;transform:scaleX(1.04);transform-origin:0 0;">6,250</span>
<span class="c b" style="left:2541.12px;top:1220.1px;font-size:21.3px;transform:scaleX(1.04);transform-origin:0 0;">5,250</span>
<span class="c b" style="left:2710.22px;top:1220.1px;font-size:21.3px;transform:scaleX(1.04);transform-origin:0 0;">3,750</span>
<span class="c b" style="left:94.58px;top:1307.8px;font-size:37.9px;color:#222;transform:scaleX(1.0084);transform-origin:0 0;-webkit-text-stroke:0.5px #222;">Startup Costs Depreciation, $</span>
<span class="c b" style="left:142.6px;top:1377.7px;font-size:21.3px;transform:scaleX(1.0213);transform-origin:0 0;">Opening Net Book Value</span>
<span class="c" style="left:161.6px;top:1405.3px;font-size:21.3px;letter-spacing:0.081px;color:#000;">Expenditure - Amortizable</span>
<span class="c" style="left:161.6px;top:1433.2px;font-size:21.3px;letter-spacing:0.329px;color:#000;">Depreciation (Depreciation Period (Years) - 10)</span>
<span class="c b" style="left:142.6px;top:1462.1px;font-size:21.3px;transform:scaleX(1.0225);transform-origin:0 0;">Closing Net Book Value</span>
<span class="c b" style="left:142.6px;top:1531.5px;font-size:21.3px;transform:scaleX(1.0213);transform-origin:0 0;">Opening Net Book Value</span>
<span class="c" style="left:161.6px;top:1558.8px;font-size:21.3px;letter-spacing:0.158px;color:#000;">Expenditure - Non-Amortizable</span>
<span class="c b" style="left:142.6px;top:1588px;font-size:21.3px;transform:scaleX(1.0225);transform-origin:0 0;">Closing Net Book Value</span>
<span class="c b" style="left:1891.9px;top:1377.4px;font-size:21.3px;">-</span>
<span class="c b" style="left:2021.29px;top:1377.4px;font-size:21.3px;transform:scaleX(1.04);transform-origin:0 0;">21,073</span>
<span class="c b" style="left:2190.19px;top:1377.4px;font-size:21.3px;transform:scaleX(1.04);transform-origin:0 0;">36,515</span>
<span class="c b" style="left:2358.15px;top:1377.4px;font-size:21.3px;transform:scaleX(1.04);transform-origin:0 0;">46,371</span>
<span class="c b" style="left:2528.29px;top:1377.4px;font-size:21.3px;transform:scaleX(1.04);transform-origin:0 0;">52,175</span>
<span class="c b" style="left:2697.39px;top:1377.4px;font-size:21.3px;transform:scaleX(1.04);transform-origin:0 0;">56,935</span>
<span class="c" style="left:1730.7px;top:1405.3px;font-size:21.3px;color:#000;">-</span>
<span class="c" style="left:1864.72px;top:1405.3px;font-size:21.3px;letter-spacing:-0.05px;color:#000;">21,250</span>
<span class="c" style="left:2033.62px;top:1405.3px;font-size:21.3px;letter-spacing:-0.05px;color:#000;">15,750</span>
<span class="c" style="left:2202.52px;top:1405.3px;font-size:21.3px;letter-spacing:-0.05px;color:#000;">10,250</span>
<span class="c" style="left:2383.65px;top:1405.3px;font-size:21.3px;letter-spacing:-0.05px;color:#000;">6,250</span>
<span class="c" style="left:2552.75px;top:1405.3px;font-size:21.3px;letter-spacing:-0.05px;color:#000;">5,250</span>
<span class="c" style="left:2721.85px;top:1405.3px;font-size:21.3px;letter-spacing:-0.05px;color:#000;">3,750</span>
<span class="c" style="left:1895.03px;top:1433.2px;font-size:21.3px;letter-spacing:-0.05px;color:#000;">177</span>
<span class="c" style="left:2063.93px;top:1433.2px;font-size:21.3px;letter-spacing:-0.05px;color:#000;">308</span>
<span class="c" style="left:2231.83px;top:1433.2px;font-size:21.3px;letter-spacing:-0.05px;color:#000;">394</span>
<span class="c" style="left:2401.83px;top:1433.2px;font-size:21.3px;letter-spacing:-0.05px;color:#000;">446</span>
<span class="c" style="left:2570.93px;top:1433.2px;font-size:21.3px;letter-spacing:-0.05px;color:#000;">490</span>
<span class="c" style="left:2740.03px;top:1433.2px;font-size:21.3px;letter-spacing:-0.05px;color:#000;">521</span>
<span class="c b" style="left:1723px;top:1461.8px;font-size:21.3px;">-</span>
<span class="c b" style="left:1852.39px;top:1461.8px;font-size:21.3px;transform:scaleX(1.04);transform-origin:0 0;">21,073</span>
<span class="c b" style="left:2021.29px;top:1461.8px;font-size:21.3px;transform:scaleX(1.04);transform-origin:0 0;">36,515</span>
<span class="c b" style="left:2189.15px;top:1461.8px;font-size:21.3px;transform:scaleX(1.04);transform-origin:0 0;">46,371</span>
<span class="c b" style="left:2359.19px;top:1461.8px;font-size:21.3px;transform:scaleX(1.04);transform-origin:0 0;">52,175</span>
<span class="c b" style="left:2528.29px;top:1461.8px;font-size:21.3px;transform:scaleX(1.04);transform-origin:0 0;">56,935</span>
<span class="c b" style="left:2697.39px;top:1461.8px;font-size:21.3px;transform:scaleX(1.04);transform-origin:0 0;">60,165</span>
<span class="c b" style="left:1891.9px;top:1531.2px;font-size:21.3px;">-</span>
<span class="c b" style="left:2060.8px;top:1531.2px;font-size:21.3px;">-</span>
<span class="c b" style="left:2229.7px;top:1531.2px;font-size:21.3px;">-</span>
<span class="c b" style="left:2398.7px;top:1531.2px;font-size:21.3px;">-</span>
<span class="c b" style="left:2567.8px;top:1531.2px;font-size:21.3px;">-</span>
<span class="c b" style="left:2736.9px;top:1531.2px;font-size:21.3px;">-</span>
<span class="c" style="left:1899.6px;top:1558.8px;font-size:21.3px;color:#000;">-</span>
<span class="c" style="left:2068.5px;top:1558.8px;font-size:21.3px;color:#000;">-</span>
<span class="c" style="left:2237.4px;top:1558.8px;font-size:21.3px;color:#000;">-</span>
<span class="c" style="left:2406.4px;top:1558.8px;font-size:21.3px;color:#000;">-</span>
<span class="c" style="left:2575.5px;top:1558.8px;font-size:21.3px;color:#000;">-</span>
<span class="c" style="left:2744.6px;top:1558.8px;font-size:21.3px;color:#000;">-</span>
<span class="c b" style="left:1891.9px;top:1587.7px;font-size:21.3px;">-</span>
<span class="c b" style="left:2060.8px;top:1587.7px;font-size:21.3px;">-</span>
<span class="c b" style="left:2229.7px;top:1587.7px;font-size:21.3px;">-</span>
<span class="c b" style="left:2398.7px;top:1587.7px;font-size:21.3px;">-</span>
<span class="c b" style="left:2567.8px;top:1587.7px;font-size:21.3px;">-</span>
<span class="c b" style="left:2736.9px;top:1587.7px;font-size:21.3px;">-</span>
<svg style="left:34px;top:34px;" width="26" height="26" viewBox="0 0 26 26"><rect x="4" y="0.8" width="20" height="24.2" rx="2.2" fill="#21772f"/>
<path d="M6.2 0.8H13V9.4H4V3A2.2 2.2 0 0 1 6.2 0.8Z" fill="#63d45c"/><path d="M13 0.8H21.8A2.2 2.2 0 0 1 24 3V9.4H13Z" fill="#b3e96e"/>
<rect x="13" y="9.4" width="11" height="7.6" fill="#247a30"/>
<rect x="1" y="9" width="12.8" height="12.6" rx="2.4" fill="#0f7440"/>
<path d="M4.6 11.6L10.4 19M10.4 11.6L4.6 19" stroke="#fff" stroke-width="2.3" fill="none"/></svg>
<span class="u" style="left:95.24px;top:39.4px;font-size:18.2px;color:#f0f0f0;transform:scaleX(0.9563);transform-origin:0 0;">life-coaching.xlsx  -  Read-Only</span>
<svg style="left:343.25px;top:43.2px;" width="17.5" height="10.8" viewBox="0 0 17.5 10.8"><path d="M2 2L8.75 8.8L15.5 2" fill="none" stroke="#f0f0f0" stroke-width="2" stroke-linecap="round" stroke-linejoin="round"/></svg>
<svg style="left:2473px;top:34px;" width="26" height="26" viewBox="0 0 26 26"><circle cx="15.6" cy="10" r="6.7" fill="none" stroke="#f0f0f0" stroke-width="1.9"/><path d="M11 15L3.2 23.2" stroke="#f0f0f0" stroke-width="1.9" stroke-linecap="round"/></svg>
<svg style="left:2552px;top:28px;" width="38" height="38" viewBox="0 0 38 38"><defs><clipPath id="av"><circle cx="19" cy="19" r="18"/></clipPath></defs>
<g clip-path="url(#av)"><rect width="38" height="38" fill="#b9d3d6"/><rect y="0" width="38" height="11" fill="#a9bcd3"/>
<rect y="24" width="38" height="14" fill="#cfd6cf"/>
<ellipse cx="19" cy="18" rx="7.2" ry="9.2" fill="#c79f88"/><ellipse cx="19" cy="13" rx="6.6" ry="5" fill="#cfac98"/>
<path d="M6 38C7 30 12 28 19 28S31 30 32 38Z" fill="#ded5c6"/><path d="M15.5 27.5L19 33L22.5 27.5Z" fill="#b98d76"/></g></svg>
<svg style="left:2627px;top:33px;" width="28" height="26" viewBox="0 0 28 26"><path d="M8 2.2H20L25.6 9.4L14 23.6L2.4 9.4Z M2.4 9.4H25.6 M8 2.2L10.4 9.4L14 23.6L17.6 9.4L20 2.2 M10.4 9.4L14 2.2L17.6 9.4" fill="none" stroke="#f0f0f0" stroke-width="1.7" stroke-linejoin="round"/></svg>
<div style="left:2703px;top:45.1px;width:16px;height:1.9px;background:#f0f0f0;"></div>
<svg style="left:2774px;top:38px;" width="19" height="19" viewBox="0 0 19 19"><rect x="1.6" y="5" width="11.6" height="11.6" rx="2.6" fill="none" stroke="#f0f0f0" stroke-width="1.8"/><path d="M5.4 2.4H12.4A4 4 0 0 1 16.4 6.4V13.4" fill="none" stroke="#f0f0f0" stroke-width="1.8" stroke-linecap="round"/></svg>
<svg style="left:2846px;top:38px;" width="19" height="19" viewBox="0 0 19 19"><path d="M2 2L16.6 16.6M16.6 2L2 16.6" stroke="#f0f0f0" stroke-width="1.9" stroke-linecap="round"/></svg>
<span class="u" style="left:41.23px;top:98px;font-size:19.8px;color:#f4f4f4;transform:scaleX(0.9653);transform-origin:0 0;">File</span>
<span class="u" style="left:197.53px;top:98px;font-size:19.8px;color:#f4f4f4;transform:scaleX(0.9699);transform-origin:0 0;">Insert</span>
<span class="u" style="left:276.63px;top:98px;font-size:19.8px;color:#f4f4f4;transform:scaleX(0.9722);transform-origin:0 0;">Draw</span>
<span class="u" style="left:352.55px;top:98px;font-size:19.8px;color:#f4f4f4;transform:scaleX(0.9504);transform-origin:0 0;">Page Layout</span>
<span class="u" style="left:490.02px;top:98px;font-size:19.8px;color:#f4f4f4;transform:scaleX(0.981);transform-origin:0 0;">Formulas</span>
<span class="u" style="left:599.62px;top:98px;font-size:19.8px;color:#f4f4f4;transform:scaleX(0.9759);transform-origin:0 0;">Data</span>
<span class="u" style="left:670.38px;top:98px;font-size:19.8px;color:#f4f4f4;transform:scaleX(0.9245);transform-origin:0 0;">Review</span>
<span class="u" style="left:762.2px;top:98px;font-size:19.8px;color:#f4f4f4;transform:scaleX(0.9391);transform-origin:0 0;">View</span>
<span class="u" style="left:834.4px;top:98px;font-size:19.8px;color:#f4f4f4;transform:scaleX(1.0169);transform-origin:0 0;">Automate</span>
<span class="u" style="left:950.3px;top:98px;font-size:19.8px;color:#f4f4f4;">Help</span>
<span class="u b" style="left:110.17px;top:98px;font-size:19.8px;transform:scaleX(1.0304);transform-origin:0 0;">Home</span>
<div style="left:111.2px;top:120.1px;width:57.6px;height:2.9px;background:#62c384;border-radius:1.5px;"></div>
<div style="left:2621px;top:87.2px;width:135px;height:35.7px;background:#262626;border:1.2px solid #6b6b6b;border-radius:7px;"></div>
<svg style="left:2627px;top:96px;" width="20" height="18" viewBox="0 0 20 18"><path d="M2.4 2.2H17.6V11.6H8L4.6 15V11.6H2.4Z" fill="none" stroke="#f0f0f0" stroke-width="1.7" stroke-linejoin="round"/></svg>
<span class="u" style="left:2651.61px;top:96.5px;font-size:19.6px;color:#f4f4f4;transform:scaleX(0.9944);transform-origin:0 0;">Comments</span>
<div style="left:2768.2px;top:87.2px;width:105px;height:35.7px;background:#3aa963;border-radius:7px;"></div>
<svg style="left:2773px;top:95px;" width="21" height="20" viewBox="0 0 21 20"><path d="M7.6 6.4H4.6A2.2 2.2 0 0 0 2.4 8.6V15.4A2.2 2.2 0 0 0 4.6 17.6H14A2.2 2.2 0 0 0 16.2 15.4V14" fill="none" stroke="#0d2b18" stroke-width="1.7" stroke-linecap="round"/><path d="M12.4 2.6L18.2 7.6L12.4 12.6V9.6C9.4 9.6 7.4 10.8 6.2 13C6.4 8.8 8.6 6 12.4 5.6Z" fill="none" stroke="#0d2b18" stroke-width="1.6" stroke-linejoin="round"/></svg>
<span class="u" style="left:2799.8px;top:96.5px;font-size:19.6px;color:#0b0b0b;transform:scaleX(0.9124);transform-origin:0 0;">Share</span>
<svg style="left:2856px;top:101.1px;" width="12.4" height="8.4" viewBox="0 0 12.4 8.4"><path d="M2 2L6.2 6.4L10.4 2" fill="none" stroke="#0b0b0b" stroke-width="1.9" stroke-linecap="round" stroke-linejoin="round"/></svg>
<div style="left:23.3px;top:128px;width:2855.5px;height:149.8px;background:#292929;border-radius:12px;"></div>
<div style="left:282px;top:134.6px;width:1.2px;height:134.6px;background:#5a5a5a;"></div>
<div style="left:633.1px;top:134.6px;width:1.2px;height:134.6px;background:#5a5a5a;"></div>
<div style="left:1083.1px;top:134.6px;width:1.2px;height:134.6px;background:#5a5a5a;"></div>
<div style="left:1325.2px;top:134.6px;width:1.2px;height:134.6px;background:#5a5a5a;"></div>
<div style="left:1543.9px;top:134.6px;width:1.2px;height:134.6px;background:#5a5a5a;"></div>
<div style="left:1867.9px;top:134.6px;width:1.2px;height:134.6px;background:#5a5a5a;"></div>
<div style="left:1962.9px;top:134.6px;width:1.2px;height:134.6px;background:#5a5a5a;"></div>
<div style="left:2056.2px;top:134.6px;width:1.2px;height:134.6px;background:#5a5a5a;"></div>
<div style="left:433.8px;top:194px;width:1.2px;height:35.6px;background:#5a5a5a;"></div>
<div style="left:498.8px;top:194px;width:1.2px;height:35.6px;background:#5a5a5a;"></div>
<div style="left:763px;top:194px;width:1.2px;height:35.6px;background:#5a5a5a;"></div>
<div style="left:1234.9px;top:194px;width:1.2px;height:35.6px;background:#5a5a5a;"></div>
<div style="left:763px;top:146px;width:1.2px;height:35.5px;background:#5a5a5a;"></div>
<div style="left:850.8px;top:144px;width:1.2px;height:93.7px;background:#5a5a5a;"></div>
<svg style="left:52px;top:139px;" width="46" height="50" viewBox="0 0 46 50"><path d="M11.6 10.4H5.4V42.4H22" fill="none" stroke="#e9a53c" stroke-width="3.4"/>
<path d="M28 10.4H33V19.6" fill="none" stroke="#e9a53c" stroke-width="3.4"/>
<path d="M11 13.6V8.6H15A4.6 4.6 0 0 1 24 8.6H28.4V13.6Z" fill="#292929" stroke="#c4c4c4" stroke-width="1.6" stroke-linejoin="round"/>
<rect x="24.6" y="21" width="18.6" height="25" fill="#2b2b2b" stroke="#d4d4d4" stroke-width="1.8"/></svg>
<span class="u" style="left:50.68px;top:196.3px;font-size:15.9px;color:#f2f2f2;transform:scaleX(1.0202);transform-origin:0 0;">Paste</span>
<svg style="left:66.15px;top:222.95px;" width="10.7" height="7.3" viewBox="0 0 10.7 7.3"><path d="M2 2L5.35 5.3L8.7 2" fill="none" stroke="#ececec" stroke-width="1.8" stroke-linecap="round" stroke-linejoin="round"/></svg>
<svg style="left:114px;top:139px;" width="20" height="27" viewBox="0 0 20 27"><path d="M5.4 2L13.6 19.6M14.6 2L6.4 19.6" stroke="#d8d8d8" stroke-width="1.5" fill="none" stroke-linecap="round"/>
<circle cx="5.2" cy="22" r="2.6" fill="none" stroke="#3c9be0" stroke-width="1.6"/><circle cx="14.8" cy="22" r="2.6" fill="none" stroke="#3c9be0" stroke-width="1.6"/></svg>
<span class="u" style="left:142.6px;top:145.5px;font-size:15.9px;color:#f2f2f2;transform:scaleX(1.035);transform-origin:0 0;">Cut</span>
<svg style="left:111px;top:178px;" width="27" height="27" viewBox="0 0 27 27"><path d="M9 18.6H2.2V2.2H9.4L12.6 5.4" fill="none" stroke="#d0d0d0" stroke-width="1.6" stroke-linejoin="round"/>
<path d="M11 5.6H18.6L23.6 10.6V24.2H11Z" fill="#292929" stroke="#d0d0d0" stroke-width="1.6" stroke-linejoin="round"/>
<path d="M18.4 5.8V10.8H23.4M14 15.6H20.6M14 19.4H20.6" fill="none" stroke="#d0d0d0" stroke-width="1.5"/></svg>
<span class="u" style="left:142.6px;top:184.5px;font-size:15.9px;color:#f2f2f2;transform:scaleX(1.1036);transform-origin:0 0;">Copy</span>
<svg style="left:209.95px;top:187.95px;" width="10.7" height="7.3" viewBox="0 0 10.7 7.3"><path d="M2 2L5.35 5.3L8.7 2" fill="none" stroke="#ececec" stroke-width="1.8" stroke-linecap="round" stroke-linejoin="round"/></svg>
<svg style="left:111px;top:217px;" width="27" height="25" viewBox="0 0 27 25"><path d="M16 9L22 2.8A1.9 1.9 0 0 1 24.8 5.4L19 11.6" fill="none" stroke="#d4d4d4" stroke-width="1.6" stroke-linejoin="round"/>
<path d="M13.4 7.6L20.4 13.6L17.4 16.8L10.6 10.8Z" fill="none" stroke="#d4d4d4" stroke-width="1.6" stroke-linejoin="round"/>
<path d="M10.4 11L17.2 17L11.4 22.4L2 13.8C5.4 13.8 8.2 12.8 10.4 11Z" fill="none" stroke="#f0b450" stroke-width="1.6" stroke-linejoin="round"/>
<path d="M6.4 17.2L14.4 19L11.4 22L6.4 17.2Z" fill="#f0b450" stroke="#f0b450" stroke-width="1"/></svg>
<span class="u" style="left:141.51px;top:223.7px;font-size:15.9px;color:#f2f2f2;transform:scaleX(1.0945);transform-origin:0 0;">Format Painter</span>
<span class="u" style="left:109.2px;top:255.1px;font-size:15.8px;color:#dadada;transform:scaleX(1.016);transform-origin:0 0;">Clipboard</span>
<svg style="left:264.6px;top:257.2px;" width="13" height="13" viewBox="0 0 13 13"><path d="M1 8.5V1H8.5" fill="none" stroke="#dcdcdc" stroke-width="1.7"/><path d="M4.5 4.5L11.5 11.5M11.6 5.6V11.6H5.6" fill="none" stroke="#dcdcdc" stroke-width="1.7"/></svg>
<div style="left:295.3px;top:146px;width:180.1px;height:35.5px;background:#272727;border:1.2px solid #626262;border-radius:6.5px;"></div>
<span class="u" style="left:298.5px;top:157.7px;font-size:15.9px;color:#f2f2f2;transform:scaleX(1.1112);transform-origin:0 0;">Tahoma</span>
<svg style="left:461.15px;top:160.75px;" width="10.7" height="7.3" viewBox="0 0 10.7 7.3"><path d="M2 2L5.35 5.3L8.7 2" fill="none" stroke="#ececec" stroke-width="1.8" stroke-linecap="round" stroke-linejoin="round"/></svg>
<div style="left:479.3px;top:146px;width:64.4px;height:35.5px;background:#272727;border:1.2px solid #626262;border-radius:6.5px;"></div>
<span class="u" style="left:483.2px;top:157.7px;font-size:15.9px;color:#f2f2f2;">8</span>
<svg style="left:529.95px;top:160.75px;" width="10.7" height="7.3" viewBox="0 0 10.7 7.3"><path d="M2 2L5.35 5.3L8.7 2" fill="none" stroke="#ececec" stroke-width="1.8" stroke-linecap="round" stroke-linejoin="round"/></svg>
<span class="u" style="left:554px;top:149.7px;font-size:26px;color:#d8d8d8;transform:scaleX(0.9056);transform-origin:0 0;">A</span>
<svg style="left:568.2px;top:152.6px;" width="10" height="7.2" viewBox="0 0 10 7.2"><path d="M2 5.2L5 2L8 5.2" fill="none" stroke="#3c9be0" stroke-width="1.9" stroke-linecap="round" stroke-linejoin="round"/></svg>
<span class="u" style="left:595.7px;top:154.7px;font-size:20.6px;color:#d8d8d8;transform:scaleX(0.9714);transform-origin:0 0;">A</span>
<svg style="left:607.3px;top:152px;" width="10" height="7.2" viewBox="0 0 10 7.2"><path d="M2 2L5 5.2L8 2" fill="none" stroke="#3c9be0" stroke-width="1.9" stroke-linecap="round" stroke-linejoin="round"/></svg>
<span class="u b" style="left:306.72px;top:200.4px;font-size:20.4px;color:#dcdcdc;transform:scaleX(0.8769);transform-origin:0 0;-webkit-text-stroke:0.5px #dcdcdc;">B</span>
<span class="c i" style="left:347.2px;top:199.2px;font-size:21px;color:#dcdcdc;font-family:'Liberation Serif',serif;font-size:24px;">I</span>
<span class="u" style="left:382.52px;top:200.2px;font-size:19.4px;color:#dcdcdc;transform:scaleX(1.0833);transform-origin:0 0;">U</span>
<div style="left:383.2px;top:219.6px;width:13.8px;height:1.7px;background:#dcdcdc;"></div>
<svg style="left:413.65px;top:208.95px;" width="10.7" height="7.3" viewBox="0 0 10.7 7.3"><path d="M2 2L5.35 5.3L8.7 2" fill="none" stroke="#ececec" stroke-width="1.8" stroke-linecap="round" stroke-linejoin="round"/></svg>
<svg style="left:443px;top:199px;" width="25" height="25" viewBox="0 0 25 25"><path d="M2 2H23M2 12H23M2 2V22M12.4 2V22M23 2V22" stroke="#d0d0d0" stroke-width="1.5" stroke-dasharray="1.5 1.9" fill="none"/>
<path d="M1 22.6H24" stroke="#e6e6e6" stroke-width="1.9"/></svg>
<svg style="left:478.95px;top:208.95px;" width="10.7" height="7.3" viewBox="0 0 10.7 7.3"><path d="M2 2L5.35 5.3L8.7 2" fill="none" stroke="#ececec" stroke-width="1.8" stroke-linecap="round" stroke-linejoin="round"/></svg>
<svg style="left:508px;top:198px;" width="27" height="20" viewBox="0 0 27 20"><path d="M12.4 3.4L20 11L12 18.4L5 11.4Z" fill="none" stroke="#d8d8d8" stroke-width="1.5" stroke-linejoin="round"/>
<path d="M12.4 3.4V1.6" stroke="#d8d8d8" stroke-width="1.5"/><path d="M10.6 9V3.4A2.2 2.2 0 0 1 15 3.4V6" fill="none" stroke="#d8d8d8" stroke-width="1.4"/>
<path d="M20.6 8.4C22.6 11 23.2 12.6 22.4 14.6" fill="none" stroke="#5aa9e6" stroke-width="2.2" stroke-linecap="round"/></svg>
<div style="left:509px;top:218.4px;width:24.2px;height:5.6px;background:#ffeb00;"></div>
<svg style="left:543.85px;top:208.95px;" width="10.7" height="7.3" viewBox="0 0 10.7 7.3"><path d="M2 2L5.35 5.3L8.7 2" fill="none" stroke="#ececec" stroke-width="1.8" stroke-linecap="round" stroke-linejoin="round"/></svg>
<span class="u" style="left:575px;top:198.4px;font-size:22.4px;color:#dcdcdc;transform:scaleX(0.9733);transform-origin:0 0;">A</span>
<div style="left:569.9px;top:218.4px;width:24.2px;height:5.6px;background:#ff0000;"></div>
<svg style="left:604.65px;top:208.95px;" width="10.7" height="7.3" viewBox="0 0 10.7 7.3"><path d="M2 2L5.35 5.3L8.7 2" fill="none" stroke="#ececec" stroke-width="1.8" stroke-linecap="round" stroke-linejoin="round"/></svg>
<span class="u" style="left:429.63px;top:255.1px;font-size:15.8px;color:#dadada;transform:scaleX(0.9737);transform-origin:0 0;">Font</span>
<svg style="left:616px;top:257.2px;" width="13" height="13" viewBox="0 0 13 13"><path d="M1 8.5V1H8.5" fill="none" stroke="#dcdcdc" stroke-width="1.7"/><path d="M4.5 4.5L11.5 11.5M11.6 5.6V11.6H5.6" fill="none" stroke="#dcdcdc" stroke-width="1.7"/></svg>
<svg style="left:652.9px;top:150.5px;" width="22" height="16.5" viewBox="0 0 22 16.5"><path d="M0 2H22M3.2 8.2H18.8M0 14.5H22" stroke="#d4d4d4" stroke-width="1.7" fill="none"/></svg>
<div style="left:685.4px;top:146px;width:35.6px;height:35.5px;background:#3b3b3b;border:1.2px solid #707070;border-radius:6.5px;"></div>
<svg style="left:692px;top:155.1px;" width="22" height="16.3" viewBox="0 0 22 16.3"><path d="M0 2H22M3.2 8.1H18.8M0 14.3H22" stroke="#e0e0e0" stroke-width="1.7" fill="none"/></svg>
<svg style="left:731px;top:160.7px;" width="22" height="16.5" viewBox="0 0 22 16.5"><path d="M0 2H22M3.2 8.2H18.8M0 14.5H22" stroke="#d4d4d4" stroke-width="1.7" fill="none"/></svg>
<svg style="left:652.9px;top:200.3px;" width="22" height="21.9" viewBox="0 0 22 21.9"><path d="M0 2H22M0 8H15.6M0 14.1H22M0 19.9H15.6" stroke="#d4d4d4" stroke-width="1.7" fill="none"/></svg>
<svg style="left:692px;top:200.3px;" width="22" height="21.9" viewBox="0 0 22 21.9"><path d="M0 2H22M3.2 8H18.8M0 14.1H22M3.2 19.9H18.8" stroke="#d4d4d4" stroke-width="1.7" fill="none"/></svg>
<svg style="left:731px;top:200.3px;" width="22" height="21.9" viewBox="0 0 22 21.9"><path d="M0 2H22M6.4 8H22M0 14.1H22M6.4 19.9H22" stroke="#d4d4d4" stroke-width="1.7" fill="none"/></svg>
<svg style="left:771px;top:149px;" width="29" height="28" viewBox="0 0 29 28"><text x="0" y="0" transform="translate(12.4 15.6) rotate(-45)" text-anchor="middle" font-family="Liberation Sans, sans-serif" font-size="14.6" fill="#d8d8d8">ab</text>
<path d="M10.4 24.6L25.6 10M19 9.6H26V16.6" fill="none" stroke="#3c9be0" stroke-width="1.8" stroke-linecap="round" stroke-linejoin="round"/></svg>
<svg style="left:804.85px;top:160.75px;" width="10.7" height="7.3" viewBox="0 0 10.7 7.3"><path d="M2 2L5.35 5.3L8.7 2" fill="none" stroke="#ececec" stroke-width="1.8" stroke-linecap="round" stroke-linejoin="round"/></svg>
<svg style="left:774.2px;top:200.3px;" width="22" height="22" viewBox="0 0 22 22"><path d="M0 2H22M0 19.9H22M11.6 8H22M11.6 14.1H22" stroke="#d4d4d4" stroke-width="1.7" fill="none"/></svg>
<svg style="left:773.2px;top:204px;" width="13" height="14" viewBox="0 0 13 14"><path d="M10.4 7.2H2.4M5.8 3.4L2 7.2L5.8 11" fill="none" stroke="#3c9be0" stroke-width="1.9" stroke-linecap="round" stroke-linejoin="round"/></svg>
<svg style="left:813px;top:200.3px;" width="22" height="22" viewBox="0 0 22 22"><path d="M0 2H22M0 19.9H22M11.6 8H22M11.6 14.1H22" stroke="#d4d4d4" stroke-width="1.7" fill="none"/></svg>
<svg style="left:812px;top:204px;" width="13" height="14" viewBox="0 0 13 14"><path d="M1.6 7.2H9.6M6.2 3.4L10 7.2L6.2 11" fill="none" stroke="#3c9be0" stroke-width="1.9" stroke-linecap="round" stroke-linejoin="round"/></svg>
<svg style="left:869px;top:152px;" width="25" height="26" viewBox="0 0 25 26"><text x="1.4" y="11" font-family="Liberation Sans, sans-serif" font-size="13.6" fill="#d8d8d8">ab</text>
<text x="1.6" y="22.4" font-family="Liberation Sans, sans-serif" font-size="13.6" fill="#d8d8d8">c</text>
<path d="M19.6 11.6C22.6 12.4 22.8 17.6 19.2 18.4H11.6M14.8 14.6L11 18.4L14.8 22.2" fill="none" stroke="#3c9be0" stroke-width="1.9" stroke-linecap="round" stroke-linejoin="round"/></svg>
<span class="u" style="left:897.6px;top:157.7px;font-size:15.9px;color:#f2f2f2;transform:scaleX(1.0777);transform-origin:0 0;">Wrap Text</span>
<svg style="left:866px;top:199px;" width="26" height="25" viewBox="0 0 26 25"><rect x="1.6" y="1.6" width="21.6" height="21.4" fill="none" stroke="#d0d0d0" stroke-width="1.7"/>
<path d="M12.4 1.6V5.6M12.4 19V23" stroke="#d0d0d0" stroke-width="1.7"/>
<rect x="1.6" y="5.6" width="21.6" height="13.4" fill="#292929" stroke="#3c9be0" stroke-width="1.8"/>
<path d="M5.4 12.3H19.4M8.4 9.2L5.2 12.3L8.4 15.4M16.4 9.2L19.6 12.3L16.4 15.4" fill="none" stroke="#3c9be0" stroke-width="1.7" stroke-linecap="round" stroke-linejoin="round"/></svg>
<span class="u" style="left:896.48px;top:205.8px;font-size:15.9px;color:#f2f2f2;transform:scaleX(1.1191);transform-origin:0 0;">Merge &amp; Center</span>
<svg style="left:1049.25px;top:208.95px;" width="10.7" height="7.3" viewBox="0 0 10.7 7.3"><path d="M2 2L5.35 5.3L8.7 2" fill="none" stroke="#ececec" stroke-width="1.8" stroke-linecap="round" stroke-linejoin="round"/></svg>
<span class="u" style="left:810.4px;top:255.1px;font-size:15.8px;color:#dadada;transform:scaleX(1.0133);transform-origin:0 0;">Alignment</span>
<svg style="left:1065.8px;top:257.2px;" width="13" height="13" viewBox="0 0 13 13"><path d="M1 8.5V1H8.5" fill="none" stroke="#dcdcdc" stroke-width="1.7"/><path d="M4.5 4.5L11.5 11.5M11.6 5.6V11.6H5.6" fill="none" stroke="#dcdcdc" stroke-width="1.7"/></svg>
<div style="left:1096.4px;top:146px;width:217.7px;height:35.5px;background:#272727;border:1.2px solid #626262;border-radius:6.5px;"></div>
<span class="u" style="left:1099.8px;top:157.7px;font-size:15.9px;color:#f2f2f2;transform:scaleX(1.0357);transform-origin:0 0;">General</span>
<svg style="left:1299.85px;top:160.75px;" width="10.7" height="7.3" viewBox="0 0 10.7 7.3"><path d="M2 2L5.35 5.3L8.7 2" fill="none" stroke="#ececec" stroke-width="1.8" stroke-linecap="round" stroke-linejoin="round"/></svg>
<span class="u" style="left:1107.7px;top:198.4px;font-size:26.6px;color:#d8d8d8;transform:scaleX(0.7333);transform-origin:0 0;">$</span>
<svg style="left:1136.95px;top:208.95px;" width="10.7" height="7.3" viewBox="0 0 10.7 7.3"><path d="M2 2L5.35 5.3L8.7 2" fill="none" stroke="#ececec" stroke-width="1.8" stroke-linecap="round" stroke-linejoin="round"/></svg>
<span class="u" style="left:1163.9px;top:198.2px;font-size:25px;color:#d8d8d8;transform:scaleX(1.0182);transform-origin:0 0;">%</span>
<span class="u b" style="left:1207.6px;top:166.4px;font-size:54px;color:#d8d8d8;font-family:'Liberation Serif',serif;">,</span>
<svg style="left:1243px;top:198px;" width="27" height="27" viewBox="0 0 27 27"><text x="15.6" y="12.6" font-family="Liberation Sans, sans-serif" font-size="13.4" fill="#d8d8d8">0</text>
<text x="4" y="25" font-family="Liberation Sans, sans-serif" font-size="13.4" fill="#d8d8d8">.00</text>
<path d="M12.8 8.4H3.4M6.8 4.8L3.2 8.4L6.8 12" fill="none" stroke="#3c9be0" stroke-width="1.8" stroke-linecap="round" stroke-linejoin="round"/></svg>
<svg style="left:1282px;top:198px;" width="27" height="27" viewBox="0 0 27 27"><text x="5" y="12.6" font-family="Liberation Sans, sans-serif" font-size="13.4" fill="#d8d8d8">.00</text>
<text x="12" y="25" font-family="Liberation Sans, sans-serif" font-size="13.4" fill="#d8d8d8">.0</text>
<path d="M2.4 20.6H11.6M8.2 17L11.8 20.6L8.2 24.2" fill="none" stroke="#3c9be0" stroke-width="1.8" stroke-linecap="round" stroke-linejoin="round"/></svg>
<span class="u" style="left:1162.46px;top:255.1px;font-size:15.8px;color:#dadada;transform:scaleX(1.036);transform-origin:0 0;">Number</span>
<svg style="left:1308px;top:257.2px;" width="13" height="13" viewBox="0 0 13 13"><path d="M1 8.5V1H8.5" fill="none" stroke="#dcdcdc" stroke-width="1.7"/><path d="M4.5 4.5L11.5 11.5M11.6 5.6V11.6H5.6" fill="none" stroke="#dcdcdc" stroke-width="1.7"/></svg>
<svg style="left:1344px;top:144.6px;" width="50" height="42" viewBox="0 0 50 42"><path d="M4.6 1.4H45.4V33H4.6Z M18.2 1.4V33 M31.8 1.4V33 M4.6 12H45.4 M4.6 22.4H45.4" fill="none" stroke="#d0d0d0" stroke-width="1.6"/>
<rect x="11.6" y="12.2" width="36.6" height="10.2" fill="#1d7fd6"/><path d="M21.4 12.2V22.4M34 12.2V22.4" stroke="#292929" stroke-width="1.3"/>
<path d="M21 17.3H2.6M10 8.4L1.6 17.3L10 26.2" fill="none" stroke="#3c9be0" stroke-width="1.9" stroke-linejoin="round"/><path d="M20 14.4H8.6M20 20.2H8.6" stroke="#3c9be0" stroke-width="1.2"/></svg>
<svg style="left:1412px;top:144.6px;" width="50" height="42" viewBox="0 0 50 42"><path d="M2 1.4H43V33H2Z M15.6 1.4V33 M29.2 1.4V33 M2 12H43 M2 22.4H43" fill="none" stroke="#d0d0d0" stroke-width="1.6"/>
<rect x="6.4" y="12.2" width="22" height="10.2" fill="#1d7fd6"/><path d="M28.4 10.6L35.4 17.3L28.4 24Z" fill="#1d7fd6"/><path d="M19.6 12.2V22.4" stroke="#292929" stroke-width="1.3"/>
<path d="M28.6 9.6L44.6 25.4M44.6 9.6L28.6 25.4" stroke="#e25a5a" stroke-width="1.9" fill="none"/></svg>
<svg style="left:1478px;top:137.4px;" width="50" height="42" viewBox="0 0 50 42"><path d="M2 8.4H42.4V40H2Z M12.2 8.4V40 M32.2 8.4V40 M2 19H42.4 M2 29.6H42.4" fill="none" stroke="#d0d0d0" stroke-width="1.6"/>
<rect x="12.4" y="19.2" width="19.6" height="10.2" fill="#1d7fd6"/>
<path d="M10.6 2.6H33.8M10.6 0.4V4.8M33.8 0.4V4.8" stroke="#3c9be0" stroke-width="1.6" fill="none"/></svg>
<span class="u" style="left:1346.49px;top:196.3px;font-size:15.9px;color:#f2f2f2;transform:scaleX(1.1086);transform-origin:0 0;">Insert</span>
<svg style="left:1362.85px;top:222.95px;" width="10.7" height="7.3" viewBox="0 0 10.7 7.3"><path d="M2 2L5.35 5.3L8.7 2" fill="none" stroke="#ececec" stroke-width="1.8" stroke-linecap="round" stroke-linejoin="round"/></svg>
<span class="u" style="left:1408.72px;top:196.3px;font-size:15.9px;color:#f2f2f2;transform:scaleX(1.0843);transform-origin:0 0;">Delete</span>
<svg style="left:1428.25px;top:222.95px;" width="10.7" height="7.3" viewBox="0 0 10.7 7.3"><path d="M2 2L5.35 5.3L8.7 2" fill="none" stroke="#ececec" stroke-width="1.8" stroke-linecap="round" stroke-linejoin="round"/></svg>
<span class="u" style="left:1471.57px;top:194.7px;font-size:15.9px;color:#f2f2f2;transform:scaleX(1.13);transform-origin:0 0;">Format</span>
<svg style="left:1493.85px;top:221.35px;" width="10.7" height="7.3" viewBox="0 0 10.7 7.3"><path d="M2 2L5.35 5.3L8.7 2" fill="none" stroke="#ececec" stroke-width="1.8" stroke-linecap="round" stroke-linejoin="round"/></svg>
<span class="u" style="left:1418.1px;top:256.1px;font-size:15.8px;color:#dadada;transform:scaleX(0.9173);transform-origin:0 0;">Cells</span>
<svg style="left:1564px;top:139px;" width="23" height="26" viewBox="0 0 23 26"><path d="M19.6 7V3.2H3.4L12 12.6L3.4 22.2H19.6V18.4" fill="none" stroke="#d8d8d8" stroke-width="1.7" stroke-linejoin="miter"/></svg>
<span class="u" style="left:1593.5px;top:145.5px;font-size:15.9px;color:#f2f2f2;transform:scaleX(1.1209);transform-origin:0 0;">AutoSum</span>
<svg style="left:1694.05px;top:148.95px;" width="10.7" height="7.3" viewBox="0 0 10.7 7.3"><path d="M2 2L5.35 5.3L8.7 2" fill="none" stroke="#ececec" stroke-width="1.8" stroke-linecap="round" stroke-linejoin="round"/></svg>
<svg style="left:1561px;top:179px;" width="28" height="24" viewBox="0 0 28 24"><rect x="2" y="1.6" width="23.2" height="20.2" fill="none" stroke="#d0d0d0" stroke-width="1.6"/><path d="M2 5.4H25.2" stroke="#d0d0d0" stroke-width="1.5"/>
<path d="M13.6 8.4V17.6M9.8 14L13.6 17.8L17.4 14" fill="none" stroke="#3c9be0" stroke-width="1.8" stroke-linecap="round" stroke-linejoin="round"/></svg>
<span class="u" style="left:1592.44px;top:184.5px;font-size:15.9px;color:#f2f2f2;transform:scaleX(1.0603);transform-origin:0 0;">Fill</span>
<svg style="left:1618.95px;top:187.15px;" width="10.7" height="7.3" viewBox="0 0 10.7 7.3"><path d="M2 2L5.35 5.3L8.7 2" fill="none" stroke="#ececec" stroke-width="1.8" stroke-linecap="round" stroke-linejoin="round"/></svg>
<svg style="left:1561px;top:217px;" width="28" height="26" viewBox="0 0 28 26"><path d="M2.6 15.4L15.6 2.6L24.8 10.6L11.8 23.4Z" fill="none" stroke="#c66ad8" stroke-width="1.8" stroke-linejoin="round"/>
<path d="M2.6 15.4L7 11.2L16.2 19.2L11.8 23.4Z" fill="#b84fce" stroke="#c66ad8" stroke-width="1.2" stroke-linejoin="round"/></svg>
<span class="u" style="left:1593.5px;top:223.7px;font-size:15.9px;color:#f2f2f2;">Clear</span>
<svg style="left:1637.25px;top:226.15px;" width="10.7" height="7.3" viewBox="0 0 10.7 7.3"><path d="M2 2L5.35 5.3L8.7 2" fill="none" stroke="#ececec" stroke-width="1.8" stroke-linecap="round" stroke-linejoin="round"/></svg>
<svg style="left:1727px;top:139px;" width="48" height="46" viewBox="0 0 48 46"><text x="2.6" y="19.6" font-family="Liberation Sans, sans-serif" font-size="24.4" fill="#3c9be0" textLength="15.6" lengthAdjust="spacingAndGlyphs">A</text>
<text x="3" y="42.4" font-family="Liberation Sans, sans-serif" font-size="24.4" fill="#d8d8d8" textLength="14.6" lengthAdjust="spacingAndGlyphs">Z</text>
<path d="M21.4 13.2H43.6L35.6 23.6V35.4H29.6V23.6Z" fill="none" stroke="#d8d8d8" stroke-width="1.7" stroke-linejoin="miter"/></svg>
<span class="u" style="left:1725.6px;top:194.7px;font-size:15.9px;color:#f2f2f2;transform:scaleX(1.1468);transform-origin:0 0;">Sort &amp;</span>
<span class="u" style="left:1723.52px;top:218.6px;font-size:15.9px;color:#f2f2f2;transform:scaleX(1.0822);transform-origin:0 0;">Filter</span>
<svg style="left:1766.65px;top:221.35px;" width="10.7" height="7.3" viewBox="0 0 10.7 7.3"><path d="M2 2L5.35 5.3L8.7 2" fill="none" stroke="#ececec" stroke-width="1.8" stroke-linecap="round" stroke-linejoin="round"/></svg>
<svg style="left:1796px;top:139px;" width="48" height="48" viewBox="0 0 48 48"><circle cx="30" cy="17.8" r="15.4" fill="none" stroke="#d8d8d8" stroke-width="1.8"/><path d="M19.2 28.8L3 45" stroke="#d8d8d8" stroke-width="1.8" stroke-linecap="round"/></svg>
<span class="u" style="left:1794.25px;top:194.7px;font-size:15.9px;color:#f2f2f2;transform:scaleX(1.1538);transform-origin:0 0;">Find &amp;</span>
<span class="u" style="left:1790.3px;top:218.6px;font-size:15.9px;color:#f2f2f2;transform:scaleX(1.0346);transform-origin:0 0;">Select</span>
<svg style="left:1841.25px;top:221.35px;" width="10.7" height="7.3" viewBox="0 0 10.7 7.3"><path d="M2 2L5.35 5.3L8.7 2" fill="none" stroke="#ececec" stroke-width="1.8" stroke-linecap="round" stroke-linejoin="round"/></svg>
<span class="u" style="left:1681.38px;top:256.1px;font-size:15.8px;color:#dadada;transform:scaleX(1.0233);transform-origin:0 0;">Editing</span>
<svg style="left:1893px;top:139px;" width="46" height="46" viewBox="0 0 46 46"><rect x="2.2" y="2.2" width="41.4" height="41.6" fill="none" stroke="#c8532c" stroke-width="2"/>
<rect x="8.2" y="8.2" width="12.6" height="12.6" fill="none" stroke="#c8532c" stroke-width="1.9"/><rect x="25.4" y="8.2" width="12.6" height="12.6" fill="none" stroke="#c8532c" stroke-width="1.9"/>
<rect x="8.2" y="25.6" width="12.6" height="12.6" fill="none" stroke="#c8532c" stroke-width="1.9"/><rect x="25.4" y="25.6" width="12.6" height="12.6" fill="none" stroke="#c8532c" stroke-width="1.9"/></svg>
<span class="u" style="left:1885.3px;top:194.7px;font-size:15.9px;color:#f2f2f2;transform:scaleX(1.1458);transform-origin:0 0;">Add-ins</span>
<span class="u" style="left:1888.3px;top:256.1px;font-size:15.8px;color:#dadada;transform:scaleX(0.9821);transform-origin:0 0;">Add-ins</span>
<svg style="left:1987px;top:139px;" width="46" height="46" viewBox="0 0 46 46"><rect x="2.4" y="2.6" width="41" height="41" fill="none" stroke="#d0d0d0" stroke-width="1.6"/>
<rect x="3.2" y="3.4" width="39.4" height="5" fill="#8a8a8a"/>
<path d="M2.4 19.6H43.4M2.4 31.6H43.4M16 31.6V43.6M30 31.6V43.6M36.4 8.4V19.6" stroke="#d0d0d0" stroke-width="1.5" fill="none"/>
<circle cx="21" cy="19.4" r="12.4" fill="#292929" stroke="#d8d8d8" stroke-width="1.7"/>
<rect x="14.4" y="18" width="3.8" height="7" fill="#8a8a8a"/><rect x="19.4" y="12.4" width="3.8" height="12.6" fill="none" stroke="#d8d8d8" stroke-width="1.2"/><rect x="24.4" y="15.4" width="3.8" height="9.6" fill="#2f8fdd"/>
<path d="M30 28.4L43.4 42.6" stroke="#d8d8d8" stroke-width="2.4"/></svg>
<span class="u" style="left:1980px;top:194.7px;font-size:15.9px;color:#f2f2f2;transform:scaleX(1.0742);transform-origin:0 0;">Analyze</span>
<span class="u" style="left:1991.51px;top:218.6px;font-size:15.9px;color:#f2f2f2;transform:scaleX(1.0908);transform-origin:0 0;">Data</span>
<svg style="left:2155px;top:141px;" width="116" height="116" viewBox="0 0 116 116"><circle cx="57.4" cy="57.6" r="56.3" fill="#fff"/>
<rect x="26.9" y="32.2" width="61" height="52.8" fill="#5b68f0"/>
<rect x="35" y="40.5" width="19" height="14" fill="#fff"/><rect x="61" y="40.5" width="19.1" height="14" fill="#fff"/>
<rect x="35" y="62.2" width="19" height="14.2" fill="#fff"/><rect x="61" y="62.2" width="19.1" height="14.2" fill="#fff"/></svg>
<div style="left:0;top:0;width:0;height:0;"><span class="u b" style="left:2292.54px;top:154.6px;font-size:51px;transform:scaleX(0.9534);transform-origin:0 0;-webkit-text-stroke:1.5px #fff;">FINM</span><span class="u b" style="left:2412.22px;top:155.9px;font-size:50px;transform:scaleX(0.9886);transform-origin:0 0;-webkit-text-stroke:1.5px #fff;">O</span><span class="u b" style="left:2450.48px;top:154.6px;font-size:51px;transform:scaleX(0.839);transform-origin:0 0;-webkit-text-stroke:1.5px #fff;">DELSLAB</span></div>
<div style="left:2426.8px;top:154.7px;width:9.2px;height:27.8px;background:#fff;border-radius:4.6px;box-shadow:0 0 0 3.2px #292929;"></div>
<span class="u" style="left:2295.2px;top:208.2px;font-size:34.6px;letter-spacing:24.962px;">Templates</span>
<svg style="left:2848px;top:251.9px;" width="18.4" height="11.4" viewBox="0 0 18.4 11.4"><path d="M2 2L9.2 9.4L16.4 2" fill="none" stroke="#f0f0f0" stroke-width="2" stroke-linecap="round" stroke-linejoin="round"/></svg>
<div style="left:2860.5px;top:278px;width:30.5px;height:1392.4px;background:#0a0a0a;"></div>
<div style="left:2863.4px;top:279.6px;width:25.2px;height:1389px;background:#151515;border-radius:12.6px;"></div>
<svg style="left:2868px;top:286px;" width="16" height="11" viewBox="0 0 16 11"><path d="M8 1.2C8.6 1.2 9 1.6 9.4 2.2L14.4 8.2C15 9.2 14.6 10 13.6 10H2.4C1.4 10 1 9.2 1.6 8.2L6.6 2.2C7 1.6 7.4 1.2 8 1.2Z" fill="#9a9a9a"/></svg>
<div style="left:2870px;top:303.7px;width:12.2px;height:1310.6px;background:#9f9f9f;border-radius:6.1px;"></div>
<svg style="left:2868px;top:1653.6px;" width="16" height="11" viewBox="0 0 16 11"><path d="M8 9.8C8.6 9.8 9 9.4 9.4 8.8L14.4 2.8C15 1.8 14.6 1 13.6 1H2.4C1.4 1 1 1.8 1.6 2.8L6.6 8.8C7 9.4 7.4 9.8 8 9.8Z" fill="#9a9a9a"/></svg>
<div style="left:11px;top:1670.4px;width:2880px;height:47.6px;background:#0a0a0a;"></div>
<svg style="left:44px;top:1683px;" width="14" height="20" viewBox="0 0 14 20"><path d="M11 2.6L3.4 10L11 17.4" fill="none" stroke="#8a8a8a" stroke-width="1.9" stroke-linecap="round" stroke-linejoin="round"/></svg>
<svg style="left:93px;top:1683px;" width="14" height="20" viewBox="0 0 14 20"><path d="M3 2.6L10.6 10L3 17.4" fill="none" stroke="#d8d8d8" stroke-width="1.9" stroke-linecap="round" stroke-linejoin="round"/></svg>
<span class="u" style="left:189.69px;top:1685.8px;font-size:20.6px;transform:scaleX(1.0107);transform-origin:0 0;">Contents</span>
<div style="left:299px;top:1676px;width:127.8px;height:35.8px;background:#fff066;border-radius:7px;"></div>
<span class="u" style="left:313.1px;top:1685.8px;font-size:20.6px;color:#111;transform:scaleX(1.0011);transform-origin:0 0;">Dashboard</span>
<div style="left:440.2px;top:1676px;width:105.7px;height:35.8px;background:#fff066;border-radius:7px;"></div>
<span class="u" style="left:453.84px;top:1685.8px;font-size:20.6px;color:#111;transform:scaleX(0.9595);transform-origin:0 0;">Revenue</span>
<div style="left:559px;top:1676px;width:158px;height:35.8px;background:#fff066;border-radius:7px;"></div>
<span class="u" style="left:571.46px;top:1685.8px;font-size:20.6px;color:#111;transform:scaleX(0.936);transform-origin:0 0;">COGS &amp; OPEX</span>
<div style="left:729.9px;top:1676px;width:89.4px;height:35.8px;background:#fff066;border-radius:7px;"></div>
<span class="u" style="left:743.01px;top:1685.8px;font-size:20.6px;color:#111;transform:scaleX(0.989);transform-origin:0 0;">Payroll</span>
<div style="left:932px;top:1676px;width:112.8px;height:35.8px;background:#fff066;border-radius:7px;"></div>
<span class="u" style="left:944.4px;top:1685.8px;font-size:20.6px;color:#111;transform:scaleX(0.9958);transform-origin:0 0;">CapTable</span>
<div style="left:1057.9px;top:1676px;width:90.2px;height:35.8px;background:#fff066;border-radius:7px;"></div>
<span class="u" style="left:1069.98px;top:1685.8px;font-size:20.6px;color:#111;transform:scaleX(1.0187);transform-origin:0 0;">Capital</span>
<div style="left:1161.1px;top:1676px;width:41.9px;height:35.8px;background:#4ab1e8;border-radius:7px;"></div>
<span class="u" style="left:1173.63px;top:1685.8px;font-size:20.6px;color:#111;transform:scaleX(0.8746);transform-origin:0 0;">IS</span>
<div style="left:1215.9px;top:1676px;width:48.3px;height:35.8px;background:#4ab1e8;border-radius:7px;"></div>
<span class="u" style="left:1228.44px;top:1685.8px;font-size:20.6px;color:#111;transform:scaleX(0.8619);transform-origin:0 0;">CF</span>
<div style="left:1277.2px;top:1676px;width:47.8px;height:35.8px;background:#4ab1e8;border-radius:7px;"></div>
<span class="u" style="left:1289.75px;top:1685.8px;font-size:20.6px;color:#111;transform:scaleX(0.851);transform-origin:0 0;">BS</span>
<div style="left:1338px;top:1676px;width:115px;height:35.8px;background:#4ab1e8;border-radius:7px;"></div>
<span class="u" style="left:1351.5px;top:1685.8px;font-size:20.6px;color:#111;transform:scaleX(0.9509);transform-origin:0 0;">Scenarios</span>
<div style="left:1466px;top:1676px;width:115.2px;height:35.8px;background:#4ab1e8;border-radius:7px;"></div>
<span class="u" style="left:1479.3px;top:1685.8px;font-size:20.6px;color:#111;transform:scaleX(1.0406);transform-origin:0 0;">Valuation</span>
<div style="left:1593.8px;top:1676px;width:114.4px;height:35.8px;background:#4ab1e8;border-radius:7px;"></div>
<span class="u" style="left:1608px;top:1685.8px;font-size:20.6px;color:#111;transform:scaleX(0.9774);transform-origin:0 0;">Summary</span>
<div style="left:1721.2px;top:1676px;width:47.8px;height:35.8px;background:#4ab1e8;border-radius:7px;"></div>
<span class="u" style="left:1733.77px;top:1685.8px;font-size:20.6px;color:#111;transform:scaleX(0.8315);transform-origin:0 0;">BE</span>
<div style="left:1782px;top:1676px;width:72.3px;height:35.8px;background:#4ab1e8;border-radius:7px;"></div>
<span class="u" style="left:1794.6px;top:1685.8px;font-size:20.6px;color:#111;transform:scaleX(0.9049);transform-origin:0 0;">ROIC</span>
<div style="left:1867.3px;top:1676px;width:84.8px;height:35.8px;background:#4ab1e8;border-radius:7px;"></div>
<span class="u" style="left:1879.32px;top:1685.8px;font-size:20.6px;color:#111;transform:scaleX(0.9771);transform-origin:0 0;">Charts</span>
<div style="left:1965px;top:1676px;width:63.9px;height:35.8px;background:#4ab1e8;border-radius:7px;"></div>
<span class="u" style="left:1977.61px;top:1685.8px;font-size:20.6px;color:#111;transform:scaleX(0.8864);transform-origin:0 0;">KPIs</span>
<div style="left:2041.9px;top:1676px;width:30.2px;height:35.8px;overflow:hidden;"><div style="left:0;top:0;width:80px;height:35.8px;background:#4ab1e8;border-radius:7px;"></div><span class="u" style="left:12.4px;top:9.4px;font-size:20.6px;color:#111;">Sc</span></div>
<div style="left:291.8px;top:1680.2px;width:1.2px;height:27.5px;background:#5c5c5c;"></div>
<div style="left:433.3px;top:1680.2px;width:1.2px;height:27.5px;background:#5c5c5c;"></div>
<div style="left:552.1px;top:1680.2px;width:1.2px;height:27.5px;background:#5c5c5c;"></div>
<div style="left:723.2px;top:1680.2px;width:1.2px;height:27.5px;background:#5c5c5c;"></div>
<div style="left:824.8px;top:1680.2px;width:1.2px;height:27.5px;background:#5c5c5c;"></div>
<div style="left:924.8px;top:1680.2px;width:1.2px;height:27.5px;background:#5c5c5c;"></div>
<div style="left:1050.7px;top:1680.2px;width:1.2px;height:27.5px;background:#5c5c5c;"></div>
<div style="left:1154px;top:1680.2px;width:1.2px;height:27.5px;background:#5c5c5c;"></div>
<div style="left:1208.8px;top:1680.2px;width:1.2px;height:27.5px;background:#5c5c5c;"></div>
<div style="left:1270.1px;top:1680.2px;width:1.2px;height:27.5px;background:#5c5c5c;"></div>
<div style="left:1331px;top:1680.2px;width:1.2px;height:27.5px;background:#5c5c5c;"></div>
<div style="left:1458.8px;top:1680.2px;width:1.2px;height:27.5px;background:#5c5c5c;"></div>
<div style="left:1586.7px;top:1680.2px;width:1.2px;height:27.5px;background:#5c5c5c;"></div>
<div style="left:1714.1px;top:1680.2px;width:1.2px;height:27.5px;background:#5c5c5c;"></div>
<div style="left:1775px;top:1680.2px;width:1.2px;height:27.5px;background:#5c5c5c;"></div>
<div style="left:1860.2px;top:1680.2px;width:1.2px;height:27.5px;background:#5c5c5c;"></div>
<div style="left:1958px;top:1680.2px;width:1.2px;height:27.5px;background:#5c5c5c;"></div>
<div style="left:2034.8px;top:1680.2px;width:1.2px;height:27.5px;background:#5c5c5c;"></div>
<div style="left:831.7px;top:1668px;width:87.7px;height:44.3px;background:#fff;border-radius:0 0 7px 7px;background:linear-gradient(#fff 55%,#fffbe0 85%,#fff6c4);"></div>
<svg style="left:819.7px;top:1670.4px;transform:scale(0.6);transform-origin:100% 0;" width="12" height="12" viewBox="0 0 12 12"><path d="M12 0V12A12 12 0 0 0 0 0Z" fill="#fff"/></svg>
<svg style="left:919.4px;top:1670.4px;transform:scale(0.6);transform-origin:0 0;" width="12" height="12" viewBox="0 0 12 12"><path d="M0 0V12A12 12 0 0 1 12 0Z" fill="#fff"/></svg>
<span class="u" style="left:843.51px;top:1680px;font-size:21.2px;color:#1c1c1c;transform:scaleX(0.8855);transform-origin:0 0;-webkit-text-stroke:0.55px #1c1c1c;">CAPEX</span>
<div style="left:844.4px;top:1704.8px;width:62.6px;height:3.2px;background:#1e7a45;"></div>
<svg style="left:2086px;top:1689px;" width="20" height="8" viewBox="0 0 20 8"><circle cx="4" cy="3.8" r="2.25" fill="#e8e8e8"/><circle cx="9.7" cy="3.8" r="2.25" fill="#e8e8e8"/><circle cx="15.4" cy="3.8" r="2.25" fill="#e8e8e8"/></svg>
<svg style="left:2134px;top:1683px;" width="20" height="20" viewBox="0 0 20 20"><path d="M10 1.6V18.4M1.6 10H18.4" stroke="#e6e6e6" stroke-width="1.7" stroke-linecap="round"/></svg>
<svg style="left:2188px;top:1685px;" width="8" height="20" viewBox="0 0 8 20"><rect x="2.2" y="2.1" width="3.6" height="3.6" rx="0.8" fill="#e8e8e8"/><rect x="2.2" y="7.9" width="3.6" height="3.6" rx="0.8" fill="#e8e8e8"/><rect x="2.2" y="13.7" width="3.6" height="3.6" rx="0.8" fill="#e8e8e8"/></svg>
<div style="left:2216.4px;top:1679.8px;width:644.1px;height:26px;background:#171717;border-radius:13px;"></div>
<svg style="left:2223px;top:1685px;" width="12" height="16" viewBox="0 0 12 16"><path d="M1.2 8C1.2 7.4 1.6 7 2.2 6.6L8.6 1.6C9.6 1 10.4 1.4 10.4 2.4V13.6C10.4 14.6 9.6 15 8.6 14.4L2.2 9.4C1.6 9 1.2 8.6 1.2 8Z" fill="#9a9a9a"/></svg>
<div style="left:2241.6px;top:1686.7px;width:55.7px;height:12.6px;background:#9f9f9f;border-radius:6.3px;"></div>
<svg style="left:2842px;top:1685px;" width="12" height="16" viewBox="0 0 12 16"><path d="M10.8 8C10.8 7.4 10.4 7 9.8 6.6L3.4 1.6C2.4 1 1.6 1.4 1.6 2.4V13.6C1.6 14.6 2.4 15 3.4 14.4L9.8 9.4C10.4 9 10.8 8.6 10.8 8Z" fill="#9a9a9a"/></svg>
<div style="left:11px;top:1718px;width:2880px;height:33px;background:#141414;border-top:1.3px solid #2c2c2c;"></div>
<span class="u" style="left:26.33px;top:1727.6px;font-size:15.4px;color:#ededed;transform:scaleX(0.9728);transform-origin:0 0;">Ready</span>
<svg style="left:97px;top:1724px;" width="26" height="24" viewBox="0 0 26 24"><rect x="2.4" y="2.4" width="20.4" height="17" fill="none" stroke="#e6e6e6" stroke-width="1.6"/><path d="M2.4 6.4H22.8M5.4 10.4H11M5.4 14H9.6" stroke="#e6e6e6" stroke-width="1.5"/>
<circle cx="17.2" cy="15.4" r="6" fill="#141414" stroke="#e6e6e6" stroke-width="1.6"/><circle cx="17.2" cy="15.4" r="2.6" fill="#e6e6e6"/></svg>
<svg style="left:145px;top:1723px;" width="25" height="25" viewBox="0 0 25 25"><circle cx="9.4" cy="4.4" r="2.6" fill="none" stroke="#e6e6e6" stroke-width="1.5"/>
<path d="M1.8 8.6C4 7.4 6.6 9.4 9.4 9.4S14.8 7.4 17 8.6C17.6 9.6 17 10.6 16 10.8L12.4 12.2V15L14.2 20.6M6.4 12.2L2.8 10.8C1.8 10.6 1.2 9.6 1.8 8.6M6.4 12.2V15.6L3.6 21.4C4.2 22.4 5.6 22.4 6.2 21.4L9.2 16.4L10.6 18.4" fill="none" stroke="#e6e6e6" stroke-width="1.5" stroke-linejoin="round" stroke-linecap="round"/>
<path d="M13.2 14.4L21.8 22.6M21.8 14.4L13.2 22.6" stroke="#e6e6e6" stroke-width="1.7" stroke-linecap="round"/></svg>
<span class="u b" style="left:173.4px;top:1727.6px;font-size:15.4px;color:#f4f4f4;transform:scaleX(1.0171);transform-origin:0 0;">Accessibility: Investigate</span>
<div style="left:2445px;top:1719.3px;width:60.4px;height:31.7px;background:#262626;"></div>
<svg style="left:2463.4px;top:1723.4px;" width="23" height="22" viewBox="0 0 23 22"><path d="M1.6 1.6H20V20H1.6Z M7.7 1.6V20 M13.9 1.6V20 M1.6 7.7H20 M1.6 13.9H20" fill="none" stroke="#f4f4f4" stroke-width="2.1"/></svg>
<svg style="left:2523.4px;top:1723.4px;" width="23" height="22" viewBox="0 0 23 22"><rect x="1.6" y="1.6" width="19.4" height="18.4" fill="none" stroke="#f0f0f0" stroke-width="1.7"/><rect x="5.6" y="5.4" width="11.4" height="10.8" fill="none" stroke="#f0f0f0" stroke-width="1.6"/><path d="M8 8.4H14.6M8 10.8H14.6M8 13.2H14.6" stroke="#f0f0f0" stroke-width="1.2"/></svg>
<svg style="left:2583.4px;top:1723.4px;" width="23" height="22" viewBox="0 0 23 22"><rect x="1.6" y="1.6" width="19.4" height="18.4" fill="none" stroke="#f0f0f0" stroke-width="1.8"/><path d="M7.6 1.6V12.4M14.2 1.6V12.4H1.6" fill="none" stroke="#f0f0f0" stroke-width="1.7"/></svg>
<div style="left:2633.2px;top:1734.2px;width:12px;height:1.5px;background:#e0e0e0;"></div>
<div style="left:2653.1px;top:1734.3px;width:147.7px;height:1.3px;background:#bdbdbd;"></div>
<div style="left:2726.3px;top:1730.4px;width:1.3px;height:9px;background:#bdbdbd;"></div>
<div style="left:2733px;top:1725.4px;width:7.6px;height:19px;background:#c9c9c9;border-radius:1.5px;"></div>
<svg style="left:2808px;top:1728.4px;" width="14" height="14" viewBox="0 0 14 14"><path d="M6.6 1V12.4M1 6.7H12.4" stroke="#e0e0e0" stroke-width="1.5"/></svg>
<span class="u" style="left:2839.2px;top:1727.6px;font-size:15.4px;color:#ededed;transform:scaleX(1.0006);transform-origin:0 0;">140%</span>
</div></body></html>
